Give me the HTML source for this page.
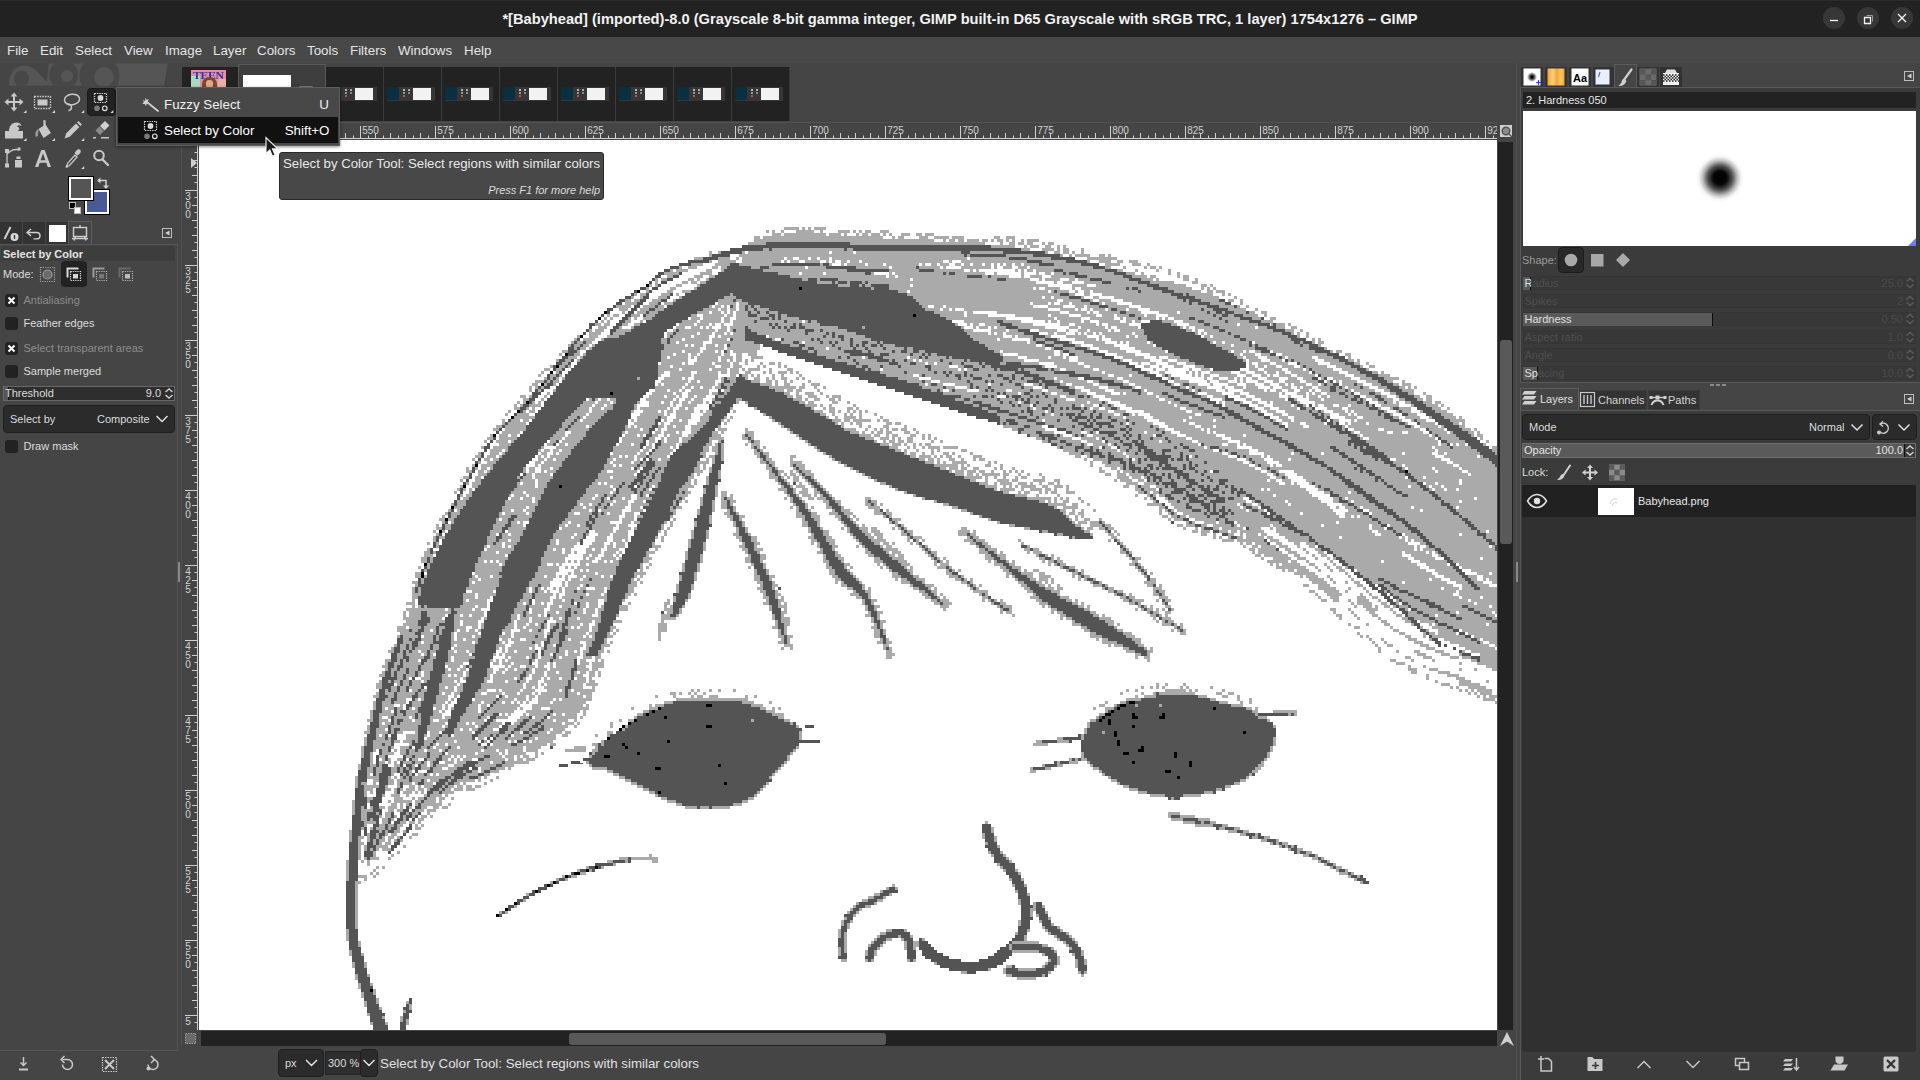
<!DOCTYPE html><html><head><meta charset="utf-8"><title>GIMP</title><style>
*{box-sizing:border-box;margin:0;padding:0}
html,body{width:1920px;height:1080px;overflow:hidden;background:#454545}
body{font-family:"Liberation Sans",sans-serif;font-size:13px;color:#dcdcdc;position:relative}
.a{position:absolute}
.t{position:absolute;white-space:nowrap;line-height:1}
#title{left:0;top:0;width:1920px;height:37px;background:#222;border-top:1px solid #2c2c2c}
#title .tx{left:0;width:1920px;top:11px;text-align:center;font-weight:bold;font-size:14.67px;color:#f2f2f2}
.wc{position:absolute;top:6px;width:22px;height:22px;border-radius:11px;background:#373737}
#menubar{left:0;top:37px;width:1920px;height:26px;background:#484848}
#menubar .t{top:7px;font-size:13.33px;color:#e4e4e4}
#leftdock{left:0;top:63px;width:178px;height:1017px;background:#454545}
#rightdock{left:1520px;top:63px;width:400px;height:1017px;background:#454545}
.ic{position:absolute;overflow:visible}
.chk{position:absolute;width:13px;height:13px;border-radius:3px;background:#222}
.row{position:absolute;left:1523px;width:393px;height:14px;background:#383838;border:1px solid #353535}
.dim{color:#505050}
</style></head><body><div id="title" class="a"><div class="t tx" id="ttx">*[Babyhead] (imported)-8.0 (Grayscale 8-bit gamma integer, GIMP built-in D65 Grayscale with sRGB TRC, 1 layer) 1754x1276 – GIMP</div><div class="wc" style="left:1823px"></div><div class="wc" style="left:1857px"></div><div class="wc" style="left:1891px"></div><svg class="a" style="left:1823px;top:5px" width="90" height="24" viewBox="1823 6 90 24" fill="none" stroke="#f4f4f4" stroke-width="1.3"><path d="M1830 20.5h8"/><path d="M1864.5 17.5h6v6h-6z"/><path d="M1866.5 15.5h6v6" stroke="#9a9a9a" stroke-width="1"/><path d="M1898 14l8 8M1906 14l-8 8"/></svg></div><div id="menubar" class="a"><div class="t" style="left:7px">File</div><div class="t" style="left:40px">Edit</div><div class="t" style="left:75px">Select</div><div class="t" style="left:124px">View</div><div class="t" style="left:165px">Image</div><div class="t" style="left:213px">Layer</div><div class="t" style="left:257px">Colors</div><div class="t" style="left:307px">Tools</div><div class="t" style="left:350px">Filters</div><div class="t" style="left:398px">Windows</div><div class="t" style="left:464px">Help</div></div><div id="leftdock" class="a"></div><svg class="a" style="left:0;top:63px" width="178" height="26" viewBox="0 63 178 26"><clipPath id="wb"><rect x="0" y="63.300" width="178" height="22.500"/></clipPath><g clip-path="url(#wb)"><path d="M8.900 85.800C8.900 74 14 66.500 24 65.700 32 65.200 38 72 46.900 81.800L48.700 63.300H167.800L164 85.800z" fill="#555"/><ellipse cx="21.500" cy="78.700" rx="7.500" ry="8.200" fill="#474747"/><circle cx="63.700" cy="75" r="14.500" fill="#474747"/><circle cx="67" cy="76" r="6" fill="#555"/><circle cx="99.400" cy="76" r="20" fill="#474747"/><circle cx="104" cy="76.900" r="9.800" fill="#555"/></g></svg><div class="a" style="left:87px;top:88px;width:29px;height:28px;background:#222;border-radius:4px;border:1px solid #1a1a1a"></div><svg class="a" style="left:0;top:88px" width="120" height="84" viewBox="0 88 120 84" fill="#c8c8c8" stroke="none"><path d="M14 92.5l3.4 4h-2.4v4.5h4.5v-2.4l4 3.4-4 3.4v-2.4h-4.5v4.5h2.4l-3.4 4-3.4-4h2.4v-4.5h-4.5v2.4l-4-3.4 4-3.4v2.4h4.5v-4.5h-2.4z"/><rect x="34.5" y="96.5" width="16" height="12" fill="none" stroke="#c8c8c8" stroke-width="1.3" stroke-dasharray="1.6 1"/><rect x="37.5" y="99.5" width="10" height="6" /><ellipse cx="72" cy="99.5" rx="7.6" ry="5.3" fill="none" stroke="#c8c8c8" stroke-width="1.5" transform="rotate(-8 72 99.5)"/><path d="M67.5 104c2 0 4 1.5 4 3.3 0 2-1.3 3-3 3.5" fill="none" stroke="#c8c8c8" stroke-width="1.5"/><rect x="94.5" y="93.5" width="12" height="9" fill="none" stroke="#d8d8d8" stroke-width="1.2" stroke-dasharray="1.4 1"/><circle cx="100.5" cy="98" r="2.9" fill="#d8d8d8"/><circle cx="97" cy="108.3" r="2.8" fill="#7a7a7a"/><circle cx="104.8" cy="108.3" r="2.3" fill="none" stroke="#e0e0e0" stroke-width="1.2"/><path d="M5 138.5v-7.5h4c0-5 3-8.500 7.500-8.500 3 0 4.500 1.500 5 3.500-1.500-1-3.500-1-4.500 0.500 1.200 0 2.200 1 2.200 2.200 0 1.300-1 2.300-2.300 2.300h6.100v7.500z"/><path d="M44.500 121v9" stroke="#c8c8c8" stroke-width="2.2" stroke-linecap="round"/><path d="M38.500 129l7-4.500 5.500 8.500-7.500 5z"/><path d="M38.500 129c-2.500 1-3.500 3-3 8l2.500-1z" fill="#9a9a9a"/><path d="M64.500 138.500l1.800-5.200 9.700-9.700 3.400 3.400-9.700 9.700z"/><path d="M77 122.600l1.500-1.500 3.400 3.400-1.500 1.500z"/><path d="M100 126l5-5 4.500 4.500-5 5z" fill="#d0d0d0"/><path d="M95.500 130.500l4-4 4.500 4.500-4 4z" fill="#8a8a8a"/><path d="M93 137.700h3M101 137.700h8" stroke="#c8c8c8" stroke-width="1.400"/><path d="M7 151v15M7 154c5-5 9-5 12-4" fill="none" stroke="#c8c8c8" stroke-width="1.300"/><rect x="5" y="149" width="4" height="4"/><rect x="5" y="163.500" width="4" height="4"/><rect x="17.500" y="147.500" width="3" height="3"/><path d="M15 160h7v7.500h-7z"/><rect x="16.500" y="156.500" width="4" height="2.500"/><path d="M35 167l6.300-17h3.400l6.300 17h-3.300l-1.400-4.200h-6.600l-1.400 4.200zm5.600-6.800h4.800l-2.400-7z"/><path d="M66.500 166.500l1-3 7.500-8.500 2 2-7.500 8.500z" fill="none" stroke="#c8c8c8" stroke-width="1.300"/><path d="M74.500 153l2.200-2.800c1-1.200 2.800-1.200 3.600-.2.800 1 .6 2.400-.4 3.400l-2.600 2.400z"/><circle cx="67" cy="166.500" r="1.300"/><circle cx="99" cy="155.500" r="4.800" fill="none" stroke="#c8c8c8" stroke-width="2"/><path d="M102.500 159.500l5.500 5.500" stroke="#c8c8c8" stroke-width="2.400" stroke-linecap="round"/><path d="M26.5 113.0v-3l-3 3z" fill="#d8d8d8"/><path d="M55.0 113.0v-3l-3 3z" fill="#d8d8d8"/><path d="M84.2 113.0v-3l-3 3z" fill="#d8d8d8"/><path d="M113.3 113.0v-3l-3 3z" fill="#d8d8d8"/><path d="M26.5 141.0v-3l-3 3z" fill="#d8d8d8"/><path d="M55.0 141.0v-3l-3 3z" fill="#d8d8d8"/><path d="M84.2 141.0v-3l-3 3z" fill="#d8d8d8"/><path d="M84.2 169.0v-3l-3 3z" fill="#d8d8d8"/></svg><div class="a" style="left:85px;top:190px;width:24px;height:24px;background:#4a5a96;border:2px solid #fff;outline:1px solid #000"></div><div class="a" style="left:69px;top:177px;width:24px;height:23px;background:#555;border:2px solid #fff;outline:1px solid #000"></div><svg class="a" style="left:68px;top:176px" width="44" height="40" viewBox="68 176 44 40"><path d="M99.500 180.500h6.500v6" fill="none" stroke="#d0d0d0" stroke-width="1.500"/><path d="M100.500 177.500v6l-3.500-3zM103 185.500h6l-3 3.500z" fill="#d0d0d0"/><rect x="69.500" y="202.500" width="6" height="6" fill="#000" stroke="#bbb" stroke-width="1"/><rect x="74.500" y="207.500" width="6" height="6" fill="#fff" stroke="#bbb" stroke-width="1"/></svg><div class="a" style="left:0;top:222px;width:22px;height:22px;background:#333"></div><div class="a" style="left:23px;top:222px;width:22px;height:22px;background:#333"></div><div class="a" style="left:46px;top:222px;width:22px;height:22px;background:#333"></div><div class="a" style="left:49px;top:225px;width:17px;height:17px;background:#fff"></div><div class="a" style="left:68px;top:221px;width:24px;height:24px;background:#454545;border:1px solid #5c5c5c;border-bottom:none"></div><svg class="a" style="left:0;top:221px" width="178" height="24" viewBox="0 221 178 24" fill="none" stroke="#d0d0d0" stroke-width="1.400"><path d="M4.500 239l6-12" stroke-width="2"/><circle cx="14.500" cy="237" r="4" fill="#d8d8d8" stroke="none"/><path d="M14.500 235v4" stroke="#333" stroke-width="1.300"/><path d="M31 229l-4 3.500 4 3.500M27.500 232.500h9c2 0 3.500 1.500 3.500 3.200 0 1.800-1.500 3.200-3.500 3.200h-3" /><rect x="73.500" y="227.500" width="13" height="9"/><path d="M75.500 236.500l-1.500 4M84.500 236.500l1.500 4M72 238.500h16M80 227v-2"/><rect x="162.500" y="228.500" width="9" height="9" stroke="#bdbdbd" stroke-width="1"/><path d="M169.500 230.500v5l-4.500-2.500z" fill="#cfcfcf" stroke="none"/></svg><div class="a" style="left:0;top:244px;width:178px;height:807px;border:1px solid #555;border-left:none;background:#454545"></div><div class="a" style="left:1px;top:246px;width:174px;height:15px;background:#3d3d3d"></div><div class="t" style="left:3.0px;top:248.7px;font-size:11.00px;color:#e4e4e4;font-weight:bold">Select by Color</div><div class="t" style="left:3.0px;top:268.7px;font-size:11.00px;color:#dcdcdc;">Mode:</div><div class="a" style="left:61px;top:261px;width:26px;height:26px;background:#222;border-radius:4px"></div><svg class="a" style="left:38px;top:262px" width="100" height="24" viewBox="38 262 100 24" fill="none" stroke="#c0c0c0" stroke-width="1.200"><rect x="40.500" y="267.500" width="14" height="14" stroke-dasharray="1.300 1" stroke="#9a9a9a"/><circle cx="47.500" cy="274.500" r="4.500" fill="#6a6a6a" stroke="#9a9a9a"/><path d="M67.500 277.500v-9h11" stroke="#d8d8d8" stroke-width="2"/><rect x="70.500" y="271.500" width="10" height="9" stroke-dasharray="1.300 1" stroke="#d8d8d8"/><rect x="73" y="274" width="5" height="4.500" fill="#d8d8d8" stroke="none"/><path d="M93.500 277.500v-9h11" stroke="#9a9a9a" stroke-width="2"/><rect x="96.500" y="271.500" width="10" height="9" stroke-dasharray="1.300 1" stroke="#aaa"/><rect x="99" y="274" width="5" height="4.500" fill="#777" stroke="none"/><path d="M119.500 277.500v-9h11" stroke="#6a6a6a" stroke-width="2"/><rect x="122.500" y="271.500" width="10" height="9" stroke-dasharray="1.300 1" stroke="#aaa"/><rect x="125" y="274" width="5" height="4.500" fill="#bbb" stroke="none"/></svg><div class="chk" style="left:5px;top:293.5px"></div><svg class="a" style="left:5px;top:293.5px" width="13" height="13"><path d="M3.500 3.500l6 6M9.500 3.500l-6 6" stroke="#fff" stroke-width="2"/></svg><div class="t" style="left:23.5px;top:294.7px;font-size:11.00px;color:#8c8c8c;">Antialiasing</div><div class="chk" style="left:5px;top:317.0px"></div><div class="t" style="left:23.5px;top:318.2px;font-size:11.00px;color:#dcdcdc;">Feather edges</div><div class="chk" style="left:5px;top:341.5px"></div><svg class="a" style="left:5px;top:341.5px" width="13" height="13"><path d="M3.500 3.500l6 6M9.500 3.500l-6 6" stroke="#fff" stroke-width="2"/></svg><div class="t" style="left:23.5px;top:342.7px;font-size:11.00px;color:#8c8c8c;">Select transparent areas</div><div class="chk" style="left:5px;top:364.5px"></div><div class="t" style="left:23.5px;top:365.7px;font-size:11.00px;color:#dcdcdc;">Sample merged</div><div class="chk" style="left:5px;top:439.5px"></div><div class="t" style="left:23.5px;top:440.7px;font-size:11.00px;color:#dcdcdc;">Draw mask</div><div class="a" style="left:3px;top:386px;width:172px;height:15px;background:#2e2e2e;border:1px solid #686868"></div><div class="a" style="left:4px;top:387px;width:5px;height:13px;background:#555"></div><div class="a" style="left:8px;top:387px;width:1px;height:13px;background:#111"></div><div class="t" style="left:5.0px;top:388.2px;font-size:11.00px;color:#dcdcdc;">Threshold</div><div class="t" style="right:1759.0px;top:388.2px;font-size:11.00px;color:#dcdcdc;">9.0</div><svg class="a" style="left:164px;top:387px" width="10" height="13" fill="none" stroke="#d0d0d0" stroke-width="1.400"><path d="M1.500 5l3.500-3 3.500 3M1.500 8l3.500 3 3.500-3"/></svg><div class="a" style="left:3px;top:405px;width:172px;height:28px;background:#2b2b2b;border:1px solid #1f1f1f;border-radius:4px"></div><div class="t" style="left:10.0px;top:413.7px;font-size:11.00px;color:#dcdcdc;">Select by</div><div class="t" style="left:97.0px;top:413.7px;font-size:11.00px;color:#dcdcdc;">Composite</div><svg class="a" style="left:155px;top:414px" width="14" height="10" fill="none" stroke="#e0e0e0" stroke-width="1.500"><path d="M1.500 2l5.500 5.500L12.500 2"/></svg><svg class="a" style="left:0;top:1052px" width="178" height="26" viewBox="0 1052 178 26" fill="none" stroke="#c8c8c8" stroke-width="1.500"><path d="M23.500 1057v8M20.500 1062.500l3 3 3-3" /><path d="M19 1068.500h9v2h-9z" fill="#c8c8c8" stroke="none"/><path d="M62.500 1059.500h5a5 5 0 1 1-5 5" /><path d="M64.500 1056l-3.500 3.500 3.500 3.500" /><rect x="102.500" y="1057.500" width="14" height="14" stroke-dasharray="1.500 1" stroke-width="1.200"/><path d="M105 1060l9 9M114 1060l-9 9" stroke-width="2"/><path d="M153 1059.500a5 5 0 1 1-5 5" /><path d="M151 1056l3.500 3.500-3.500 3.500" /><circle cx="148.500" cy="1068.500" r="2" fill="#c8c8c8" stroke="none"/></svg><div class="a" style="left:182px;top:67px;width:608px;height:54px;background:#222"></div><div class="a" style="left:325px;top:67px;width:1px;height:54px;background:#3a3a3a"></div><div class="a" style="left:383px;top:67px;width:1px;height:54px;background:#3a3a3a"></div><div class="a" style="left:441px;top:67px;width:1px;height:54px;background:#3a3a3a"></div><div class="a" style="left:499px;top:67px;width:1px;height:54px;background:#3a3a3a"></div><div class="a" style="left:557px;top:67px;width:1px;height:54px;background:#3a3a3a"></div><div class="a" style="left:615px;top:67px;width:1px;height:54px;background:#3a3a3a"></div><div class="a" style="left:673px;top:67px;width:1px;height:54px;background:#3a3a3a"></div><div class="a" style="left:731px;top:67px;width:1px;height:54px;background:#3a3a3a"></div><div class="a" style="left:789px;top:67px;width:1px;height:54px;background:#3a3a3a"></div><div class="a" style="left:191px;top:70px;width:35px;height:20px;background:#ee8aa2;overflow:hidden"><div class="a" style="left:0;top:6px;width:9px;height:14px;background:#a8dcc0"></div><div class="a" style="left:27px;top:9px;width:8px;height:11px;background:#e8b0a8"></div><div class="t" style="left:2px;top:0.5px;font-family:'Liberation Serif',serif;font-weight:bold;font-size:10px;letter-spacing:-0.3px;color:#2a3a9c;transform:scaleX(1.18);transform-origin:0 0">TEEN</div><div class="a" style="left:11px;top:7px;width:15px;height:14px;border-radius:7px 7px 0 0;background:#7a4a2c"></div><div class="a" style="left:15px;top:10px;width:7px;height:8px;border-radius:3px;background:#e0a888"></div><div class="a" style="left:14px;top:17px;width:10px;height:4px;background:#c8a030"></div></div><div class="a" style="left:238px;top:64px;width:88px;height:58px;background:#3e3e3e;border:1px solid #595959;border-bottom:none"></div><div class="a" style="left:243px;top:75px;width:48px;height:20px;background:#fff"></div><div class="a" style="left:299px;top:86px;width:14px;height:3px;background:#777;border-radius:1px"></div><div class="a" style="left:329px;top:87px;width:48px;height:14px;background:#363636"></div><div class="a" style="left:329px;top:87px;width:12px;height:13px;background:#0a2f40"></div><div class="a" style="left:355px;top:88px;width:18px;height:12px;background:#f2f2f2"></div><div class="a" style="left:345px;top:89px;width:2px;height:2px;background:#b8b8b8;box-shadow:0 3px #999,0 6px #c05050,5px 0 #aaa,5px 3px #888"></div><div class="a" style="left:387px;top:87px;width:48px;height:14px;background:#363636"></div><div class="a" style="left:387px;top:87px;width:12px;height:13px;background:#0a2f40"></div><div class="a" style="left:413px;top:88px;width:18px;height:12px;background:#f2f2f2"></div><div class="a" style="left:403px;top:89px;width:2px;height:2px;background:#b8b8b8;box-shadow:0 3px #999,0 6px #c05050,5px 0 #aaa,5px 3px #888"></div><div class="a" style="left:445px;top:87px;width:48px;height:14px;background:#363636"></div><div class="a" style="left:445px;top:87px;width:12px;height:13px;background:#0a2f40"></div><div class="a" style="left:471px;top:88px;width:18px;height:12px;background:#f2f2f2"></div><div class="a" style="left:461px;top:89px;width:2px;height:2px;background:#b8b8b8;box-shadow:0 3px #999,0 6px #c05050,5px 0 #aaa,5px 3px #888"></div><div class="a" style="left:503px;top:87px;width:48px;height:14px;background:#363636"></div><div class="a" style="left:503px;top:87px;width:12px;height:13px;background:#0a2f40"></div><div class="a" style="left:529px;top:88px;width:18px;height:12px;background:#f2f2f2"></div><div class="a" style="left:519px;top:89px;width:2px;height:2px;background:#b8b8b8;box-shadow:0 3px #999,0 6px #c05050,5px 0 #aaa,5px 3px #888"></div><div class="a" style="left:561px;top:87px;width:48px;height:14px;background:#363636"></div><div class="a" style="left:561px;top:87px;width:12px;height:13px;background:#0a2f40"></div><div class="a" style="left:587px;top:88px;width:18px;height:12px;background:#f2f2f2"></div><div class="a" style="left:577px;top:89px;width:2px;height:2px;background:#b8b8b8;box-shadow:0 3px #999,0 6px #c05050,5px 0 #aaa,5px 3px #888"></div><div class="a" style="left:619px;top:87px;width:48px;height:14px;background:#363636"></div><div class="a" style="left:619px;top:87px;width:12px;height:13px;background:#0a2f40"></div><div class="a" style="left:645px;top:88px;width:18px;height:12px;background:#f2f2f2"></div><div class="a" style="left:635px;top:89px;width:2px;height:2px;background:#b8b8b8;box-shadow:0 3px #999,0 6px #c05050,5px 0 #aaa,5px 3px #888"></div><div class="a" style="left:677px;top:87px;width:48px;height:14px;background:#363636"></div><div class="a" style="left:677px;top:87px;width:12px;height:13px;background:#0a2f40"></div><div class="a" style="left:703px;top:88px;width:18px;height:12px;background:#f2f2f2"></div><div class="a" style="left:693px;top:89px;width:2px;height:2px;background:#b8b8b8;box-shadow:0 3px #999,0 6px #c05050,5px 0 #aaa,5px 3px #888"></div><div class="a" style="left:735px;top:87px;width:48px;height:14px;background:#363636"></div><div class="a" style="left:735px;top:87px;width:12px;height:13px;background:#0a2f40"></div><div class="a" style="left:761px;top:88px;width:18px;height:12px;background:#f2f2f2"></div><div class="a" style="left:751px;top:89px;width:2px;height:2px;background:#b8b8b8;box-shadow:0 3px #999,0 6px #c05050,5px 0 #aaa,5px 3px #888"></div><svg class="a" style="left:182px;top:122px" width="1315" height="18" viewBox="182 122 1315 18"><rect x="182" y="122" width="1331" height="18" fill="#454545"/><rect x="182" y="122" width="1316" height="1" fill="#525252"/><rect x="199" y="138" width="1298" height="1" fill="#cfcfcf"/><text x="212.2" y="134" font-size="10" fill="#d0d0d0" font-family="Liberation Sans,sans-serif">500</text><text x="287.2" y="134" font-size="10" fill="#d0d0d0" font-family="Liberation Sans,sans-serif">525</text><text x="362.2" y="134" font-size="10" fill="#d0d0d0" font-family="Liberation Sans,sans-serif">550</text><text x="437.2" y="134" font-size="10" fill="#d0d0d0" font-family="Liberation Sans,sans-serif">575</text><text x="512.2" y="134" font-size="10" fill="#d0d0d0" font-family="Liberation Sans,sans-serif">600</text><text x="587.2" y="134" font-size="10" fill="#d0d0d0" font-family="Liberation Sans,sans-serif">625</text><text x="662.2" y="134" font-size="10" fill="#d0d0d0" font-family="Liberation Sans,sans-serif">650</text><text x="737.2" y="134" font-size="10" fill="#d0d0d0" font-family="Liberation Sans,sans-serif">675</text><text x="812.2" y="134" font-size="10" fill="#d0d0d0" font-family="Liberation Sans,sans-serif">700</text><text x="887.2" y="134" font-size="10" fill="#d0d0d0" font-family="Liberation Sans,sans-serif">725</text><text x="962.2" y="134" font-size="10" fill="#d0d0d0" font-family="Liberation Sans,sans-serif">750</text><text x="1037.2" y="134" font-size="10" fill="#d0d0d0" font-family="Liberation Sans,sans-serif">775</text><text x="1112.2" y="134" font-size="10" fill="#d0d0d0" font-family="Liberation Sans,sans-serif">800</text><text x="1187.2" y="134" font-size="10" fill="#d0d0d0" font-family="Liberation Sans,sans-serif">825</text><text x="1262.2" y="134" font-size="10" fill="#d0d0d0" font-family="Liberation Sans,sans-serif">850</text><text x="1337.2" y="134" font-size="10" fill="#d0d0d0" font-family="Liberation Sans,sans-serif">875</text><text x="1412.2" y="134" font-size="10" fill="#d0d0d0" font-family="Liberation Sans,sans-serif">900</text><text x="1487.2" y="134" font-size="10" fill="#d0d0d0" font-family="Liberation Sans,sans-serif">925</text><path d="M203.5 135.5v2.5M210.5 126v12M218.5 135.5v2.5M225.5 133v5M233.5 135.5v2.5M240.5 133v5M248.5 135.5v2.5M255.5 133v5M263.5 135.5v2.5M270.5 133v5M278.5 135.5v2.5M285.5 126v12M293.5 135.5v2.5M300.5 133v5M308.5 135.5v2.5M315.5 133v5M323.5 135.5v2.5M330.5 133v5M338.5 135.5v2.5M345.5 133v5M353.5 135.5v2.5M360.5 126v12M368.5 135.5v2.5M375.5 133v5M383.5 135.5v2.5M390.5 133v5M398.5 135.5v2.5M405.5 133v5M413.5 135.5v2.5M420.5 133v5M428.5 135.5v2.5M435.5 126v12M443.5 135.5v2.5M450.5 133v5M458.5 135.5v2.5M465.5 133v5M473.5 135.5v2.5M480.5 133v5M488.5 135.5v2.5M495.5 133v5M503.5 135.5v2.5M510.5 126v12M518.5 135.5v2.5M525.5 133v5M533.5 135.5v2.5M540.5 133v5M548.5 135.5v2.5M555.5 133v5M563.5 135.5v2.5M570.5 133v5M578.5 135.5v2.5M585.5 126v12M593.5 135.5v2.5M600.5 133v5M608.5 135.5v2.5M615.5 133v5M623.5 135.5v2.5M630.5 133v5M638.5 135.5v2.5M645.5 133v5M653.5 135.5v2.5M660.5 126v12M668.5 135.5v2.5M675.5 133v5M683.5 135.5v2.5M690.5 133v5M698.5 135.5v2.5M705.5 133v5M713.5 135.5v2.5M720.5 133v5M728.5 135.5v2.5M735.5 126v12M743.5 135.5v2.5M750.5 133v5M758.5 135.5v2.5M765.5 133v5M773.5 135.5v2.5M780.5 133v5M788.5 135.5v2.5M795.5 133v5M803.5 135.5v2.5M810.5 126v12M818.5 135.5v2.5M825.5 133v5M833.5 135.5v2.5M840.5 133v5M848.5 135.5v2.5M855.5 133v5M863.5 135.5v2.5M870.5 133v5M878.5 135.5v2.5M885.5 126v12M893.5 135.5v2.5M900.5 133v5M908.5 135.5v2.5M915.5 133v5M923.5 135.5v2.5M930.5 133v5M938.5 135.5v2.5M945.5 133v5M953.5 135.5v2.5M960.5 126v12M968.5 135.5v2.5M975.5 133v5M983.5 135.5v2.5M990.5 133v5M998.5 135.5v2.5M1005.5 133v5M1013.5 135.5v2.5M1020.5 133v5M1028.5 135.5v2.5M1035.5 126v12M1043.5 135.5v2.5M1050.5 133v5M1058.5 135.5v2.5M1065.5 133v5M1073.5 135.5v2.5M1080.5 133v5M1088.5 135.5v2.5M1095.5 133v5M1103.5 135.5v2.5M1110.5 126v12M1118.5 135.5v2.5M1125.5 133v5M1133.5 135.5v2.5M1140.5 133v5M1148.5 135.5v2.5M1155.5 133v5M1163.5 135.5v2.5M1170.5 133v5M1178.5 135.5v2.5M1185.5 126v12M1193.5 135.5v2.5M1200.5 133v5M1208.5 135.5v2.5M1215.5 133v5M1223.5 135.5v2.5M1230.5 133v5M1238.5 135.5v2.5M1245.5 133v5M1253.5 135.5v2.5M1260.5 126v12M1268.5 135.5v2.5M1275.5 133v5M1283.5 135.5v2.5M1290.5 133v5M1298.5 135.5v2.5M1305.5 133v5M1313.5 135.5v2.5M1320.5 133v5M1328.5 135.5v2.5M1335.5 126v12M1343.5 135.5v2.5M1350.5 133v5M1358.5 135.5v2.5M1365.5 133v5M1373.5 135.5v2.5M1380.5 133v5M1388.5 135.5v2.5M1395.5 133v5M1403.5 135.5v2.5M1410.5 126v12M1418.5 135.5v2.5M1425.5 133v5M1433.5 135.5v2.5M1440.5 133v5M1448.5 135.5v2.5M1455.5 133v5M1463.5 135.5v2.5M1470.5 133v5M1478.5 135.5v2.5M1485.5 126v12M1493.5 135.5v2.5" stroke="#cfcfcf" stroke-width="1" fill="none"/></svg><svg class="a" style="left:181px;top:122px" width="18" height="924" viewBox="181 122 18 924"><rect x="181" y="122" width="18" height="924" fill="#454545"/><rect x="181" y="122" width="1" height="924" fill="#525252"/><rect x="197" y="140" width="1" height="890" fill="#cfcfcf"/><text x="188" y="200.0" text-anchor="middle" font-size="10" fill="#d0d0d0" font-family="Liberation Sans,sans-serif">3</text><text x="188" y="209.0" text-anchor="middle" font-size="10" fill="#d0d0d0" font-family="Liberation Sans,sans-serif">0</text><text x="188" y="218.0" text-anchor="middle" font-size="10" fill="#d0d0d0" font-family="Liberation Sans,sans-serif">0</text><text x="188" y="275.0" text-anchor="middle" font-size="10" fill="#d0d0d0" font-family="Liberation Sans,sans-serif">3</text><text x="188" y="284.0" text-anchor="middle" font-size="10" fill="#d0d0d0" font-family="Liberation Sans,sans-serif">2</text><text x="188" y="293.0" text-anchor="middle" font-size="10" fill="#d0d0d0" font-family="Liberation Sans,sans-serif">5</text><text x="188" y="350.0" text-anchor="middle" font-size="10" fill="#d0d0d0" font-family="Liberation Sans,sans-serif">3</text><text x="188" y="359.0" text-anchor="middle" font-size="10" fill="#d0d0d0" font-family="Liberation Sans,sans-serif">5</text><text x="188" y="368.0" text-anchor="middle" font-size="10" fill="#d0d0d0" font-family="Liberation Sans,sans-serif">0</text><text x="188" y="425.0" text-anchor="middle" font-size="10" fill="#d0d0d0" font-family="Liberation Sans,sans-serif">3</text><text x="188" y="434.0" text-anchor="middle" font-size="10" fill="#d0d0d0" font-family="Liberation Sans,sans-serif">7</text><text x="188" y="443.0" text-anchor="middle" font-size="10" fill="#d0d0d0" font-family="Liberation Sans,sans-serif">5</text><text x="188" y="500.0" text-anchor="middle" font-size="10" fill="#d0d0d0" font-family="Liberation Sans,sans-serif">4</text><text x="188" y="509.0" text-anchor="middle" font-size="10" fill="#d0d0d0" font-family="Liberation Sans,sans-serif">0</text><text x="188" y="518.0" text-anchor="middle" font-size="10" fill="#d0d0d0" font-family="Liberation Sans,sans-serif">0</text><text x="188" y="575.0" text-anchor="middle" font-size="10" fill="#d0d0d0" font-family="Liberation Sans,sans-serif">4</text><text x="188" y="584.0" text-anchor="middle" font-size="10" fill="#d0d0d0" font-family="Liberation Sans,sans-serif">2</text><text x="188" y="593.0" text-anchor="middle" font-size="10" fill="#d0d0d0" font-family="Liberation Sans,sans-serif">5</text><text x="188" y="650.0" text-anchor="middle" font-size="10" fill="#d0d0d0" font-family="Liberation Sans,sans-serif">4</text><text x="188" y="659.0" text-anchor="middle" font-size="10" fill="#d0d0d0" font-family="Liberation Sans,sans-serif">5</text><text x="188" y="668.0" text-anchor="middle" font-size="10" fill="#d0d0d0" font-family="Liberation Sans,sans-serif">0</text><text x="188" y="725.0" text-anchor="middle" font-size="10" fill="#d0d0d0" font-family="Liberation Sans,sans-serif">4</text><text x="188" y="734.0" text-anchor="middle" font-size="10" fill="#d0d0d0" font-family="Liberation Sans,sans-serif">7</text><text x="188" y="743.0" text-anchor="middle" font-size="10" fill="#d0d0d0" font-family="Liberation Sans,sans-serif">5</text><text x="188" y="800.0" text-anchor="middle" font-size="10" fill="#d0d0d0" font-family="Liberation Sans,sans-serif">5</text><text x="188" y="809.0" text-anchor="middle" font-size="10" fill="#d0d0d0" font-family="Liberation Sans,sans-serif">0</text><text x="188" y="818.0" text-anchor="middle" font-size="10" fill="#d0d0d0" font-family="Liberation Sans,sans-serif">0</text><text x="188" y="875.0" text-anchor="middle" font-size="10" fill="#d0d0d0" font-family="Liberation Sans,sans-serif">5</text><text x="188" y="884.0" text-anchor="middle" font-size="10" fill="#d0d0d0" font-family="Liberation Sans,sans-serif">2</text><text x="188" y="893.0" text-anchor="middle" font-size="10" fill="#d0d0d0" font-family="Liberation Sans,sans-serif">5</text><text x="188" y="950.0" text-anchor="middle" font-size="10" fill="#d0d0d0" font-family="Liberation Sans,sans-serif">5</text><text x="188" y="959.0" text-anchor="middle" font-size="10" fill="#d0d0d0" font-family="Liberation Sans,sans-serif">5</text><text x="188" y="968.0" text-anchor="middle" font-size="10" fill="#d0d0d0" font-family="Liberation Sans,sans-serif">0</text><text x="188" y="1025.0" text-anchor="middle" font-size="10" fill="#d0d0d0" font-family="Liberation Sans,sans-serif">5</text><path d="M192 145.5h5M194.5 152.5h2.5M192 160.5h5M194.5 167.5h2.5M192 175.5h5M194.5 182.5h2.5M185 190.5h12M194.5 197.5h2.5M192 205.5h5M194.5 212.5h2.5M192 220.5h5M194.5 227.5h2.5M192 235.5h5M194.5 242.5h2.5M192 250.5h5M194.5 257.5h2.5M185 265.5h12M194.5 272.5h2.5M192 280.5h5M194.5 287.5h2.5M192 295.5h5M194.5 302.5h2.5M192 310.5h5M194.5 317.5h2.5M192 325.5h5M194.5 332.5h2.5M185 340.5h12M194.5 347.5h2.5M192 355.5h5M194.5 362.5h2.5M192 370.5h5M194.5 377.5h2.5M192 385.5h5M194.5 392.5h2.5M192 400.5h5M194.5 407.5h2.5M185 415.5h12M194.5 422.5h2.5M192 430.5h5M194.5 437.5h2.5M192 445.5h5M194.5 452.5h2.5M192 460.5h5M194.5 467.5h2.5M192 475.5h5M194.5 482.5h2.5M185 490.5h12M194.5 497.5h2.5M192 505.5h5M194.5 512.5h2.5M192 520.5h5M194.5 527.5h2.5M192 535.5h5M194.5 542.5h2.5M192 550.5h5M194.5 557.5h2.5M185 565.5h12M194.5 572.5h2.5M192 580.5h5M194.5 587.5h2.5M192 595.5h5M194.5 602.5h2.5M192 610.5h5M194.5 617.5h2.5M192 625.5h5M194.5 632.5h2.5M185 640.5h12M194.5 647.5h2.5M192 655.5h5M194.5 662.5h2.5M192 670.5h5M194.5 677.5h2.5M192 685.5h5M194.5 692.5h2.5M192 700.5h5M194.5 707.5h2.5M185 715.5h12M194.5 722.5h2.5M192 730.5h5M194.5 737.5h2.5M192 745.5h5M194.5 752.5h2.5M192 760.5h5M194.5 767.5h2.5M192 775.5h5M194.5 782.5h2.5M185 790.5h12M194.5 797.5h2.5M192 805.5h5M194.5 812.5h2.5M192 820.5h5M194.5 827.5h2.5M192 835.5h5M194.5 842.5h2.5M192 850.5h5M194.5 857.5h2.5M185 865.5h12M194.5 872.5h2.5M192 880.5h5M194.5 887.5h2.5M192 895.5h5M194.5 902.5h2.5M192 910.5h5M194.5 917.5h2.5M192 925.5h5M194.5 932.5h2.5M185 940.5h12M194.5 947.5h2.5M192 955.5h5M194.5 962.5h2.5M192 970.5h5M194.5 977.5h2.5M192 985.5h5M194.5 992.5h2.5M192 1000.5h5M194.5 1007.5h2.5M185 1015.5h12M194.5 1022.5h2.5" stroke="#cfcfcf" stroke-width="1" fill="none"/><path d="M191 158l6 5-6 5z" fill="#cfcfcf"/></svg><div class="a" style="left:199px;top:140px;width:1298px;height:890px;background:#fff;overflow:hidden"><svg class="a" style="left:0;top:0" width="1298" height="890" viewBox="199 140 1298 890"><defs><filter id="px" x="199" y="140" width="1299" height="891" filterUnits="userSpaceOnUse" primitiveUnits="userSpaceOnUse" color-interpolation-filters="sRGB">
<feTurbulence type="fractalNoise" baseFrequency="0.37 0.41" numOctaves="1" seed="7" result="n"/>
<feColorMatrix in="n" type="matrix" values="1 0 0 0 0 1 0 0 0 0 1 0 0 0 0 0 0 0 0 1" result="ng"/>
<feComposite in="SourceGraphic" in2="ng" operator="arithmetic" k1="0" k2="1" k3="0.56" k4="-0.28" result="noisy"/>
<feComposite in="noisy" in2="SourceAlpha" operator="in" result="masked"/>
<feComponentTransfer in="masked" result="post"><feFuncR type="discrete" tableValues="0 .3333 .3333 .6667 .6667 1"/><feFuncG type="discrete" tableValues="0 .3333 .3333 .6667 .6667 1"/><feFuncB type="discrete" tableValues="0 .3333 .3333 .6667 .6667 1"/><feFuncA type="discrete" tableValues="0 1"/></feComponentTransfer>
<feFlood x="200" y="141" width="1" height="1" flood-color="#000"/><feComposite width="3" height="3"/><feTile result="grid"/>
<feComposite in="post" in2="grid" operator="in"/><feMorphology operator="dilate" radius="1"/>
</filter></defs><g filter="url(#px)"><path d="M740.0 262.0L742.8 258.9L746.2 254.3L750.5 249.0L756.0 243.7L763.1 239.1L772.0 236.0L783.3 234.4L796.9 233.9L811.9 234.0L827.9 234.6L844.2 235.4L860.0 236.0L876.0 236.7L892.9 237.7L910.1 238.9L926.9 240.1L942.7 241.2L957.0 242.0L969.3 242.4L980.1 242.5L989.9 242.5L999.4 242.6L1009.2 243.0L1020.0 244.0L1031.7 245.5L1043.7 247.5L1056.0 249.8L1068.7 252.3L1081.7 255.1L1095.0 258.0L1109.1 261.1L1124.0 264.5L1139.2 268.1L1154.3 271.9L1168.8 275.9L1182.0 280.0L1194.0 284.4L1205.3 289.0L1215.8 293.8L1225.9 298.7L1235.5 303.4L1245.0 308.0L1254.1 312.3L1262.6 316.6L1270.8 320.7L1278.8 324.8L1286.8 328.9L1295.0 333.0L1303.3 337.2L1311.7 341.3L1320.0 345.5L1328.3 349.7L1336.7 353.8L1345.0 358.0L1353.3 362.1L1361.7 366.1L1370.0 370.2L1378.3 374.3L1386.7 378.5L1395.0 383.0L1403.3 387.5L1411.5 392.1L1419.7 396.8L1428.0 401.7L1436.4 407.1L1445.0 413.0L1453.8 419.6L1462.8 426.6L1471.9 434.1L1481.1 441.9L1490.5 449.9L1500.0 458.0L1510.4 466.9L1521.9 476.7L1533.4 486.8L1544.3 496.3L1553.4 504.3L1560.0 510.0L1560.0 740.0L1553.8 735.6L1545.6 729.4L1535.6 722.2L1524.4 714.4L1512.4 706.8L1500.0 700.0L1486.3 693.9L1470.9 688.1L1454.6 682.5L1438.4 676.9L1423.2 671.1L1410.0 665.0L1398.8 658.5L1389.0 651.8L1380.2 644.9L1372.1 638.0L1364.5 631.3L1357.0 625.0L1349.9 619.0L1343.5 613.3L1337.6 607.7L1331.8 602.3L1326.0 597.1L1320.0 592.0L1313.8 587.1L1307.6 582.5L1301.3 578.0L1295.0 573.6L1288.6 569.3L1282.0 565.0L1275.4 560.7L1269.0 556.3L1262.4 552.1L1255.5 547.9L1248.1 543.9L1240.0 540.0L1231.0 536.6L1221.1 533.7L1210.8 530.9L1200.3 528.0L1189.9 524.4L1180.0 520.0L1170.8 514.5L1162.0 508.3L1153.4 501.4L1144.6 494.3L1135.3 487.1L1125.0 480.0L1113.9 472.9L1102.4 465.6L1090.3 458.2L1077.6 450.9L1064.2 443.7L1050.0 437.0L1034.8 430.7L1018.5 424.7L1001.6 418.9L984.3 413.3L967.0 407.7L950.0 402.0L932.8 396.1L914.8 389.9L896.9 383.8L879.6 378.0L863.8 372.6L850.0 368.0L838.9 364.4L829.9 361.6L822.4 359.2L815.4 357.1L808.2 354.8L800.0 352.0L790.1 348.4L779.1 344.3L767.9 340.0L757.3 335.9L748.4 332.5L742.0 330.0z" fill="#b6b6b6" stroke="#d6d6d6" stroke-width="12.0" stroke-linejoin="round" paint-order="stroke"/><path d="M940.1 307.1L963.0 310.4L985.8 313.0L1008.7 315.6L1031.4 319.6L1053.8 325.0L1075.9 331.3L1097.6 338.2L1119.2 345.5M1030.6 279.0L1053.3 285.4L1075.7 292.8L1097.8 300.8M1138.9 410.1L1158.8 422.1L1179.0 434.0L1200.5 443.9L1222.6 452.2L1244.4 461.1L1265.2 472.5L1285.3 485.1M1053.9 334.7L1075.9 341.6L1097.5 349.4L1119.0 357.4L1140.3 365.9L1161.0 375.3L1181.8 384.9L1203.3 393.7L1225.0 401.8M964.6 362.0L987.3 368.6L1010.0 375.4L1032.6 383.3M963.5 327.1L986.3 331.6L1009.2 336.3L1031.8 342.3L1054.1 349.7L1076.0 358.2M1031.1 304.3L1053.6 309.6L1075.8 315.8L1097.7 322.6L1119.5 329.7M1184.3 341.0L1205.7 350.2L1227.1 359.6L1248.3 369.3M918.7 335.1L941.4 340.3L964.1 345.4L986.8 350.0L1009.6 354.6L1032.1 360.3L1054.3 367.4L1076.0 375.6L1097.3 384.7L1118.3 394.3M1137.7 451.7L1156.8 465.9L1176.4 479.6L1197.9 490.1L1220.3 498.1L1242.5 506.9M1140.4 361.3L1161.2 369.4L1182.2 377.7L1203.7 385.3M1249.1 349.8L1269.8 361.3L1290.2 373.3L1310.7 385.2L1331.0 397.4M1431.5 452.6L1451.0 462.8L1469.9 473.8M985.8 313.7L1008.7 317.1L1031.4 322.0L1053.8 328.2L1075.9 335.5M1031.6 330.0L1053.9 336.3L1075.9 343.6L1097.5 351.7L1119.0 360.1L1140.2 368.9L1160.8 378.8L1181.6 388.8L1203.0 397.9L1224.8 406.2M920.2 369.5L942.7 375.8L965.2 381.9L987.9 387.6L1010.5 393.3L1032.9 399.8L1054.8 407.6L1076.2 416.6L1097.1 426.7L1117.6 437.3M1143.1 272.6L1165.4 278.0L1187.5 284.5L1208.9 292.6L1229.9 301.9L1250.7 311.4L1271.5 321.1L1292.1 331.5L1312.8 341.9L1333.5 352.2M1076.1 386.5L1097.3 395.1L1118.2 404.2L1138.8 413.7L1158.7 424.2L1179.0 434.5M1137.0 474.0L1155.8 488.2L1175.2 501.7L1196.7 511.5L1219.3 518.3L1241.7 526.0L1262.5 537.3L1282.4 550.2L1302.1 563.4L1321.2 577.4M898.4 378.4L920.9 386.0L943.4 393.6L965.9 401.1L988.4 408.4L1011.0 415.8L1033.3 423.8L1055.2 433.0L1076.3 443.8M1161.8 356.4L1182.9 364.4L1204.5 372.0L1226.1 379.3L1247.5 387.0" fill="none" stroke="#fff" stroke-width="3"/><path d="M1223.0 442.8L1244.9 450.8L1265.7 461.1L1285.8 472.6L1305.9 484.2L1325.6 496.3L1344.5 509.3L1363.5 522.2L1382.6 535.1M1269.4 370.3L1289.9 380.8L1310.4 391.3L1330.8 401.9L1350.9 412.8L1371.1 423.5L1391.2 434.6M963.4 323.6L986.2 326.7L1009.0 329.8L1031.7 334.2L1054.0 339.9L1075.9 346.5L1097.5 354.0M1030.9 294.6L1053.5 299.4L1075.7 305.2L1097.8 311.5L1119.7 318.1L1141.5 325.0M917.4 304.6L940.2 307.7L963.0 310.5L985.8 312.5M1075.8 318.9L1097.7 325.7L1119.4 332.7L1141.0 340.1L1162.2 348.2L1183.4 356.9L1204.9 365.3L1226.4 373.6L1247.7 382.3L1268.5 392.3" fill="none" stroke="#d0d0d0" stroke-width="4"/><path d="M1391.9 425.9L1412.0 436.2L1432.0 446.7L1451.4 458.0M1053.7 319.2L1075.8 326.2L1097.6 334.0L1119.3 342.1L1140.7 350.7L1161.7 360.1L1182.6 370.0L1204.1 379.4L1225.7 388.3L1247.1 397.7M1156.5 472.7L1176.1 485.5L1197.6 494.9L1220.1 501.7L1242.4 509.3L1263.2 520.2L1283.2 532.7L1303.0 545.3L1322.2 558.7L1340.3 573.5M1097.2 403.5L1118.0 414.2L1138.5 425.5L1158.1 438.0L1178.1 450.2L1199.6 460.1M1288.9 403.3L1309.3 413.7L1329.5 424.4L1349.4 435.6L1369.3 446.5L1389.2 457.7L1409.0 469.1L1429.0 480.2L1448.8 491.6M942.0 357.1L964.6 363.2L987.4 369.0L1010.0 374.8" fill="none" stroke="#d0d0d0" stroke-width="3"/><path d="M1137.7 451.3L1156.9 463.4L1176.7 474.8L1198.3 483.2L1220.8 489.2M1054.5 378.6L1076.1 387.4L1097.2 397.2L1118.1 407.4L1138.7 418.2M1053.8 323.7L1075.8 330.8L1097.6 338.7L1119.2 346.9L1140.6 355.5L1161.4 365.0L1182.4 374.9L1203.8 384.2M1096.9 455.2L1117.0 468.0L1136.8 481.5L1155.4 496.5L1174.7 510.7L1196.2 521.0L1218.9 528.1L1241.3 536.2L1262.1 548.0M1441.2 588.3L1462.1 597.7L1482.9 607.5L1503.3 618.1L1522.7 630.5" fill="none" stroke="#e0e0e0" stroke-width="2"/><path d="M1312.1 356.3L1332.7 366.7L1353.2 377.2L1373.8 387.5L1394.3 398.3L1414.4 409.6L1434.2 421.5M1249.4 342.0L1270.2 351.7L1290.7 361.9L1311.3 371.9L1331.8 382.0L1352.2 392.3L1372.7 402.3L1393.0 412.8L1413.1 423.6L1433.0 434.9L1452.2 447.1M984.7 272.0L1007.7 273.9L1030.6 277.5L1053.3 282.5L1075.7 288.5L1097.9 294.9L1120.0 301.6L1142.0 308.7L1163.7 316.5L1185.2 325.1L1206.6 334.3M804.7 305.9L827.6 310.9L850.4 316.3L873.2 321.9L895.9 327.7L918.7 333.7M1033.4 427.5L1055.2 438.0L1076.4 450.0L1096.8 462.2L1116.9 474.8M1289.4 391.1L1309.9 401.5L1330.2 412.1L1350.2 423.1M1120.7 264.2L1143.2 269.7L1165.5 275.8L1187.6 282.9L1209.0 291.7L1229.9 301.8L1250.7 311.9L1271.4 322.3L1292.0 333.0M830.8 356.3L853.4 363.6L876.0 371.3L898.5 379.0L920.9 386.9L943.4 394.8M801.2 261.1L824.3 263.9L847.3 267.2L870.3 270.7L893.3 274.4M808.1 348.7L830.8 355.6L853.4 362.8L875.9 370.2L898.4 377.7L920.9 385.3M895.2 312.2L917.9 316.0L940.6 319.8L963.4 323.2M1242.9 497.0L1263.7 508.6L1283.7 521.7L1303.5 534.9L1322.7 549.0L1340.9 564.4L1359.1 579.7L1377.5 594.9L1396.3 609.6L1416.5 622.3L1437.8 632.8M1119.2 344.1L1140.6 353.1L1161.5 363.1L1182.4 373.5L1203.9 383.3L1225.4 392.7L1246.9 402.4L1267.6 413.8L1287.9 426.0M1141.5 323.6L1162.9 332.2L1184.2 341.5L1205.7 351.1L1227.0 360.7L1248.2 370.7L1269.0 381.8L1289.3 393.5L1309.7 405.2M1401.5 551.9L1421.5 565.2L1442.1 577.2L1462.7 588.8M941.5 342.9L964.1 347.5L986.9 351.4L1009.6 355.5" fill="none" stroke="#fff" stroke-width="4"/><path d="M1141.7 319.6L1163.2 326.6L1184.7 334.2L1206.2 342.2L1227.5 350.5L1248.7 359.1M984.6 270.2L1007.7 270.9L1030.5 273.4L1053.2 277.3L1075.6 281.9L1097.9 287.0M1054.2 354.1L1076.0 361.5L1097.4 369.8L1118.6 378.5L1139.6 387.6L1159.9 397.8L1180.5 407.9L1202.0 416.6M1341.2 559.6L1359.5 573.8L1378.1 587.8L1397.1 601.3L1417.3 613.0L1438.6 622.6L1460.0 631.4L1481.4 640.4L1502.4 650.4" fill="none" stroke="#fff" stroke-width="2"/><path d="M1183.7 350.6L1205.2 359.7L1226.6 368.7L1247.9 378.1L1268.7 388.7L1289.0 400.1L1309.4 411.3L1329.6 422.9L1349.4 434.9M1155.5 494.0L1174.7 511.0L1196.0 524.1M1179.9 418.3L1201.3 428.2L1223.3 436.7L1245.1 445.8L1265.8 457.1L1286.0 469.6L1306.0 482.2L1325.7 495.4L1344.5 509.5M1182.7 368.3L1204.2 377.2L1225.8 385.7L1247.2 394.6L1268.0 405.0L1288.3 416.2L1308.7 427.4M986.3 331.7L1009.1 336.0L1031.8 341.6L1054.1 348.5" fill="none" stroke="#e0e0e0" stroke-width="4"/><path d="M915.6 263.1L938.6 266.1L961.6 268.9L984.7 270.9L1007.7 273.0L1030.6 276.8L1053.3 282.1L1075.7 288.4L1097.9 295.1M805.3 312.6L828.1 317.7L850.9 323.2L873.6 328.8L896.3 334.6L919.0 340.5L941.6 346.6L964.3 352.5L987.1 357.9L1009.8 363.5M1187.6 282.3L1209.0 290.7L1229.9 300.7L1250.7 310.7L1271.5 321.0L1292.1 331.5L1312.8 341.9L1333.5 352.2M828.4 321.8L851.1 327.3L873.8 333.1L896.5 338.9L919.1 345.0L941.8 351.1L964.4 357.0M1393.9 402.5L1414.2 412.2L1434.1 422.4L1453.3 433.8M1309.9 402.4L1330.0 415.0L1349.9 428.1L1369.7 441.1M1030.8 286.4L1053.4 291.9L1075.7 298.3L1097.8 305.3L1119.8 312.5L1141.6 320.2L1163.1 328.6L1184.5 337.7L1205.9 347.2L1227.2 356.8L1248.4 366.8M941.5 342.7L964.1 347.1L986.9 350.8L1009.6 354.6L1032.1 359.5L1054.3 365.5M983.9 243.8L1007.1 244.6L1030.1 247.5L1052.9 251.9L1075.5 257.0L1098.1 262.5L1120.6 268.2L1143.0 274.2L1165.3 280.8M1053.5 302.9L1075.8 308.3L1097.8 314.2L1119.7 320.3L1141.4 326.7L1162.9 333.9" fill="none" stroke="#e0e0e0" stroke-width="3"/><path d="M938.4 261.2L961.4 263.6L984.5 265.1L1007.6 266.6L1030.5 270.0L1053.2 274.9M778.2 259.1L801.0 259.1L824.0 260.5L847.0 262.3L870.0 264.1L892.9 266.0M1248.6 362.4L1269.3 373.5L1289.7 385.2L1310.1 396.9M1010.9 413.2L1033.2 419.4L1055.1 426.9L1076.3 435.6M1119.9 306.3L1141.8 313.7L1163.4 321.9L1184.8 330.8L1206.3 340.2L1227.5 350.0L1248.7 360.0L1269.4 371.0L1289.8 382.5L1310.3 394.0" fill="none" stroke="#d0d0d0" stroke-width="5"/><path d="M918.7 335.1L941.4 340.0L964.0 344.6L986.8 348.6M1141.9 310.3L1163.6 317.7L1185.1 325.9L1206.6 334.6L1227.8 343.8L1249.0 353.3L1269.7 363.7M1199.2 467.4L1221.5 473.5L1243.6 480.3L1264.5 490.0L1284.6 501.1L1304.6 512.2" fill="none" stroke="#d0d0d0" stroke-width="2"/><path d="M1345.2 499.1L1364.3 511.8L1383.5 524.5L1402.9 537.1L1423.0 548.5L1443.5 559.1L1463.9 569.4L1484.1 580.0L1504.0 591.4L1523.1 604.3L1541.7 618.0" fill="none" stroke="#e0e0e0" stroke-width="5"/><path d="M1285.8 473.5L1305.8 486.9L1325.3 500.9L1344.1 516.0M1303.0 544.7L1322.2 558.5L1340.3 573.6L1358.4 588.7L1376.7 603.5L1395.6 617.9L1415.8 630.1L1437.2 639.9L1458.9 648.9L1480.6 657.9" fill="none" stroke="#fff" stroke-width="5"/><path d="M824.3 265.0L847.4 268.9L870.5 273.0M1461.7 605.2L1482.5 615.3L1503.0 626.4L1522.6 639.4L1541.4 653.4M1176.1 485.0L1197.8 491.2L1220.5 495.0M1418.6 598.8L1439.6 609.2L1460.8 618.9M1033.1 414.8L1055.0 422.4L1076.3 431.3L1097.0 441.4L1117.3 451.9M778.6 263.9L801.4 264.3L824.4 265.9L847.4 267.9L870.3 269.9L893.2 272.1M1076.3 439.9L1096.9 449.5L1117.2 459.6L1137.1 470.1M1160.2 391.5L1180.9 400.9L1202.4 409.1L1224.3 416.3M1326.0 489.0L1345.1 501.0L1364.2 512.8L1383.5 524.7L1402.9 536.3M1186.9 294.7L1208.2 305.7L1229.1 317.7M1378.4 584.1L1397.3 598.8L1417.4 611.7L1438.6 622.5L1460.0 632.5L1481.3 642.6M1328.4 444.9L1347.9 458.0L1367.4 471.0L1386.9 484.2L1406.4 497.6M1031.8 340.0L1054.1 347.0L1076.0 355.1M1331.5 388.8L1351.8 398.7L1372.2 408.4L1392.5 418.4L1412.7 428.8M1053.4 291.6L1075.7 297.8L1097.8 304.5L1119.8 311.4L1141.7 318.8M961.1 253.4L984.2 255.1L1007.3 256.9L1030.3 260.6L1053.0 265.8M1117.7 432.0L1137.9 444.5L1157.2 458.4L1176.9 471.8M1349.0 441.0L1368.9 451.8L1388.8 462.7L1408.6 473.8M1054.6 392.5L1076.2 400.7L1097.2 409.7L1117.9 419.3L1138.3 429.3M1378.9 577.7L1398.2 589.0L1418.6 598.6L1439.8 606.3M1415.4 634.2L1437.0 643.2L1458.8 651.3L1480.6 659.5M1435.9 657.4L1457.8 667.7L1479.7 678.1M741.0 296.6L759.6 291.0L780.9 288.9M1394.7 393.2L1415.0 403.2L1434.9 413.8L1453.9 425.8L1472.1 438.9M1346.3 482.9L1365.5 496.2L1384.8 509.6L1404.1 523.0M1225.2 397.3L1246.7 406.7L1267.5 417.9L1287.7 429.9" fill="none" stroke="#555" stroke-width="3"/><path d="M1241.7 525.0L1262.5 538.2L1282.3 553.1M1263.5 512.7L1283.6 523.7L1303.5 534.7L1322.9 546.6M1142.7 283.8L1164.8 291.9L1186.5 301.2L1207.9 311.7L1228.8 323.1M941.7 349.7L964.4 355.0L987.1 359.8L1009.8 364.6M1208.8 294.7L1229.8 304.0L1250.6 313.4L1271.4 323.0L1292.0 332.9M1347.5 464.1L1367.2 474.7L1386.8 485.5L1406.6 496.2M1306.2 478.9L1325.9 491.2L1344.9 504.3" fill="none" stroke="#777" stroke-width="2"/><path d="M1136.7 484.0L1155.3 499.4L1174.5 513.9L1196.0 524.6L1218.7 532.0L1241.1 540.3M782.6 306.6L805.2 311.2L828.0 315.9L850.7 321.0M1249.3 345.2L1270.1 353.3L1290.7 361.8M852.0 341.3L874.6 346.7L897.1 352.2M1157.2 457.5L1177.1 468.5L1198.6 476.5L1221.1 482.3M757.5 269.3L778.6 264.0L801.4 264.0M1185.7 316.1L1207.2 324.2L1228.4 332.9L1249.4 341.9L1270.2 351.5M1309.7 405.9L1329.8 418.8L1349.6 432.1L1369.4 445.3L1389.1 458.9M1290.8 359.5L1311.4 370.7L1331.8 382.1L1352.1 393.7L1372.5 405.1L1392.7 417.0" fill="none" stroke="#555" stroke-width="2"/><path d="M1302.6 553.9L1321.8 566.1L1339.9 579.5M1311.1 376.1L1331.6 387.0L1351.8 398.2L1372.2 409.2L1392.4 420.5M1352.9 382.3L1373.3 394.3L1393.5 406.8L1413.5 419.8L1433.2 433.3L1452.2 447.7M1053.1 269.7L1075.6 274.7L1098.0 280.2L1120.3 285.9L1142.5 291.8M1200.5 443.8L1222.7 450.2L1244.6 457.4L1265.4 467.0L1285.6 477.8M915.9 268.6L938.8 271.9L961.8 274.9L984.8 277.1L1007.9 279.4M1161.1 373.0L1181.9 383.0L1203.4 392.2M1097.1 414.9L1117.8 427.1L1138.0 439.9M1348.8 444.4L1368.7 454.4L1388.6 464.5M825.4 279.4L848.2 281.7L871.1 283.9L893.9 286.2M1242.6 504.7L1263.5 513.9L1283.5 524.4L1303.5 535.1M802.5 277.7L825.4 280.4L848.4 283.6L871.2 286.8L894.1 290.2M1291.7 340.7L1312.4 349.0L1333.2 357.1L1354.0 365.2" fill="none" stroke="#777" stroke-width="3"/><path d="M1356.0 620.2L1374.3 632.1L1393.3 643.2M1413.2 659.4L1435.1 666.5L1457.5 672.6L1479.7 678.8M1302.2 561.4L1321.3 574.5L1339.3 589.1L1357.3 603.6M1480.0 672.9L1501.4 684.2L1521.6 697.9L1541.0 713.0" fill="none" stroke="#fff" stroke-width="4"/><path d="M1458.3 659.0L1480.2 668.0L1501.6 678.1L1521.7 690.6L1541.0 704.5M1435.5 661.6L1457.5 671.4L1479.6 681.3L1501.2 692.3M1262.9 527.8L1282.8 540.3L1302.6 553.1L1321.8 566.7L1339.8 581.7L1357.8 596.7M1376.2 610.1L1395.0 624.2L1415.3 636.1L1436.8 645.6L1458.6 654.1M1338.8 596.7L1356.7 611.5L1374.8 625.8L1393.6 639.5L1414.0 650.8" fill="none" stroke="#fff" stroke-width="6"/><path d="M1301.4 577.2L1320.4 591.6L1338.1 607.6L1355.7 623.6M1394.2 632.7L1414.4 645.8L1435.9 656.2L1457.9 665.5L1479.9 674.8L1501.4 685.3M1338.2 604.9L1355.9 621.1L1373.9 637.1L1392.4 652.3L1412.7 665.0L1434.5 674.7L1456.8 683.2M1373.7 638.8L1392.4 653.1L1412.7 665.0L1434.6 673.9L1456.9 681.5M1357.1 605.9L1375.3 620.5L1394.1 634.5L1414.4 646.1L1436.0 655.1L1458.1 663.1M1393.0 646.0L1413.4 656.7L1435.3 664.5" fill="none" stroke="#fff" stroke-width="5"/><path d="M1356.0 620.2L1373.8 637.9L1392.3 654.0L1412.6 666.2" fill="none" stroke="#fff" stroke-width="3"/><linearGradient id="lg1" gradientUnits="userSpaceOnUse" x1="470" y1="700" x2="395" y2="890"><stop offset="0" stop-color="#c2c2c2"/><stop offset="0.45" stop-color="#cccccc"/><stop offset="1" stop-color="#ececec"/></linearGradient><path d="M735.0 262.0L733.2 261.1L730.9 259.7L728.1 258.1L724.6 256.8L720.3 256.3L715.0 257.0L708.2 259.2L699.9 262.6L690.8 266.8L681.5 271.3L672.7 275.8L665.0 280.0L658.5 283.8L652.7 287.6L647.4 291.4L642.4 295.3L637.3 299.1L632.0 303.0L626.5 306.9L621.0 310.7L615.6 314.6L610.1 318.5L604.6 322.6L599.0 327.0L593.4 331.6L587.7 336.3L582.0 341.2L576.3 346.3L570.6 351.6L565.0 357.0L559.4 362.6L553.9 368.4L548.4 374.4L542.9 380.6L537.4 386.8L532.0 393.0L526.5 399.4L521.0 405.9L515.5 412.6L510.1 419.2L504.9 425.7L500.0 432.0L495.4 438.0L491.1 443.7L486.9 449.2L482.9 454.9L479.0 460.8L475.0 467.0L471.0 473.7L467.1 480.9L463.2 488.2L459.4 495.6L455.6 502.9L452.0 510.0L448.5 516.8L445.0 523.4L441.6 529.9L438.3 536.4L435.1 543.1L432.0 550.0L429.0 557.2L426.0 564.6L423.2 572.2L420.4 579.8L417.7 587.4L415.0 595.0L412.4 602.6L409.9 610.2L407.4 617.8L404.9 625.4L402.5 632.8L400.0 640.0L397.5 646.8L394.9 653.3L392.4 659.7L389.9 666.1L387.4 672.8L385.0 680.0L382.7 687.8L380.4 695.9L378.2 704.4L376.0 713.0L374.0 721.6L372.0 730.0L370.1 738.3L368.3 746.7L366.5 755.0L364.9 763.3L363.3 771.7L362.0 780.0L360.8 788.4L359.8 797.0L358.9 805.6L358.2 814.1L357.5 822.2L357.0 830.0L356.6 837.7L356.3 845.6L356.2 853.1L356.1 860.0L356.1 865.8L356.0 870.0L362.0 880.0L366.2 876.2L372.1 870.9L379.0 864.6L386.4 857.8L393.6 851.1L400.0 845.0L405.6 839.3L410.9 833.6L416.0 828.0L421.1 822.5L426.4 817.1L432.0 812.0L437.7 807.2L443.4 802.7L449.2 798.3L455.5 794.0L462.3 789.6L470.0 785.0L478.9 780.3L488.8 775.6L499.4 770.8L510.1 765.9L520.4 760.6L530.0 755.0L539.0 749.0L548.0 742.8L556.6 736.2L564.6 729.4L571.8 722.4L578.0 715.0L582.8 707.2L586.4 699.1L589.2 690.6L591.6 682.0L594.1 673.4L597.0 665.0L600.4 656.6L603.8 648.0L607.3 639.4L610.9 630.9L614.4 622.8L618.0 615.0L621.6 607.8L625.3 601.1L628.9 594.7L632.6 588.3L636.3 581.8L640.0 575.0L643.6 567.8L647.1 560.4L650.6 552.8L654.2 545.2L658.0 537.6L662.0 530.0L666.4 522.5L671.1 514.9L676.0 507.4L680.9 499.9L685.6 492.4L690.0 485.0L694.0 477.7L697.7 470.5L701.3 463.3L704.8 456.2L708.3 449.1L712.0 442.0L715.9 434.9L720.0 427.9L724.1 420.8L728.0 413.8L731.7 406.9L735.0 400.0L737.8 393.4L740.3 387.3L742.5 381.1L744.5 374.7L746.3 367.8L748.0 360.0L749.6 350.5L751.0 339.3L752.3 327.5L753.4 316.3L754.3 306.8L755.0 300.0z" fill="url(#lg1)" stroke="#d8d8d8" stroke-width="12.0" stroke-linejoin="round" paint-order="stroke"/><path d="M578.8 543.4L568.0 558.9L558.3 575.0L549.2 591.4M503.5 577.9L494.5 594.6L486.6 611.8L478.4 628.9M519.8 542.7L511.3 560.1L502.8 577.4M689.8 283.6L673.7 293.6L658.0 304.7L642.5 316.5L626.5 327.7M659.7 361.6L646.8 375.5L634.5 389.9L622.7 404.8L610.9 419.8L599.1 435.0M591.2 347.4L576.3 360.2L561.9 373.7L548.1 387.7L534.6 402.0M548.2 440.7L536.6 456.3L525.2 472.0L514.1 488.0M404.9 734.0L397.5 750.7L390.4 767.7L383.8 785.1L378.1 802.9M498.3 474.4L486.3 489.6L475.3 505.5M672.8 478.2L663.1 494.6L653.6 511.0M593.6 349.7L578.4 362.2L563.7 375.3M497.2 620.2L490.9 638.7L482.8 656.1L473.7 672.5L464.1 688.2L453.6 703.3L442.8 717.6M592.8 530.8L582.3 546.5L572.0 562.3L562.6 578.6L553.9 595.3L545.4 612.1M635.5 494.4L625.6 510.5L616.5 527.0L607.5 543.5L597.9 559.8M668.1 370.2L655.9 384.7L644.5 399.8L633.5 415.2L622.5 430.8L611.3 446.4M721.9 373.7L712.8 390.0L702.7 405.6L692.5 421.4L683.1 437.6M741.5 299.0L734.7 314.3L727.9 330.2M688.4 391.0L677.7 406.6L667.9 422.6L658.3 438.9L648.4 455.2L638.1 471.3M637.7 393.1L626.5 408.5L615.4 424.1L604.3 439.9L593.3 455.8L583.0 472.1" fill="none" stroke="#fff" stroke-width="4"/><path d="M519.1 566.5L511.2 584.2L503.8 602.2M673.3 321.2L659.7 334.4L645.4 347.0L631.3 359.9L617.8 373.5M701.8 298.4L688.8 310.7L675.9 324.0M583.1 446.5L571.5 461.7L560.4 477.4L549.5 493.1L538.6 509.0L528.3 525.3L519.0 542.1M655.3 461.8L643.6 476.4L631.8 491.1M474.6 578.7L468.9 597.8L463.1 617.0L456.4 635.4L449.2 653.3" fill="none" stroke="#ddd" stroke-width="2"/><path d="M546.7 682.4L536.1 697.7L523.6 711.4L510.2 723.9L496.2 735.7L481.5 746.4M504.1 427.6L493.0 444.0L482.4 460.8L473.0 478.3L464.6 496.5M399.5 773.7L391.4 790.1L384.2 807.0L377.7 824.2L371.1 841.0M567.5 432.1L555.1 446.9L543.1 462.1L531.4 477.4M635.7 544.0L628.5 561.8L620.5 579.2L612.4 596.5M501.6 647.1L492.1 663.4L481.7 678.7L470.6 693.3L458.9 707.3M457.6 791.3L442.3 802.1L428.0 814.1L414.9 827.5L402.3 841.2L389.0 854.3L375.4 867.0M625.5 583.5L616.6 600.2L608.8 617.3L601.7 634.8L595.0 652.5L588.9 670.4L584.0 688.7M681.9 461.6L673.1 478.5L663.6 495.0M739.6 344.6L733.4 361.3L725.5 377.6L716.2 393.5L705.6 408.6L694.9 423.8M732.8 385.5L724.7 402.4L715.4 418.7L706.0 435.0M595.8 533.4L585.8 549.5L576.1 565.7L567.3 582.5L559.2 599.7M518.2 440.1L506.1 455.4L494.4 471.1L483.7 487.5L474.1 504.4L464.7 521.6M623.7 581.9L614.1 598.0L605.5 614.5L597.7 631.5L590.2 648.6M721.3 322.2L711.6 336.5L701.0 351.1L689.6 365.6M551.6 617.1L545.1 635.3L539.8 653.8L533.4 672.0L524.0 688.3L513.0 703.1M518.9 614.2L513.0 632.7L506.4 650.8L497.6 667.7L487.6 683.3M466.5 547.8L458.0 565.4L450.6 583.4L443.5 601.6M492.3 616.3L485.8 634.7L477.7 652.1L468.8 668.7M700.2 403.2L690.7 419.6L682.1 436.6L673.7 453.8M667.2 472.9L657.0 488.9L646.9 504.9L637.7 521.4L629.4 538.4L621.2 555.5" fill="none" stroke="#fff" stroke-width="3"/><path d="M470.4 526.3L462.7 544.7L455.5 563.4L449.4 582.5M400.2 730.7L393.3 747.8L386.6 765.2L380.5 782.9M716.8 289.4L704.3 301.4L691.5 313.8M571.7 487.3L561.8 503.9L551.9 520.4L542.4 537.2L534.0 554.6M718.2 259.4L700.2 266.4L682.9 275.1M395.9 705.5L390.1 723.7L384.6 742.0M557.0 644.9L550.7 662.4L543.0 679.5L532.1 694.7L519.5 708.2L506.1 720.8M605.4 590.6L597.8 608.1L591.0 626.0L584.5 643.9L578.5 662.1L573.9 680.7M715.5 287.6L702.5 299.2L689.3 311.2L676.0 324.1L662.5 337.4M722.9 267.4L707.3 276.3L692.3 286.6L677.3 297.6L662.8 309.9M411.2 694.2L404.1 711.5L397.5 728.8L391.1 746.4" fill="none" stroke="#ddd" stroke-width="4"/><path d="M541.4 408.2L529.3 423.7L517.7 439.6L506.4 455.7M533.7 453.7L523.5 470.5L513.6 487.6M749.4 334.6L746.0 352.5L741.1 370.0L734.1 386.9L725.5 403.3M744.5 303.9L738.3 319.3L731.8 335.0L724.1 350.7L714.9 366.2M444.5 529.9L437.2 548.7L431.0 568.0L425.6 587.6" fill="none" stroke="#ddd" stroke-width="3"/><path d="M633.2 361.8L620.0 375.7L607.3 390.0L594.8 404.7L582.4 419.6M653.2 485.3L643.9 502.1L635.6 519.5L628.2 537.3M647.4 402.5L636.3 417.9L625.2 433.4L613.9 448.8L602.8 464.5L592.3 480.5M520.1 708.7L507.0 721.5L493.2 733.5L478.9 744.5M695.7 372.0L684.3 386.9L673.1 401.9L662.6 417.4L652.4 433.3L641.9 449.1L631.0 464.7M747.3 285.3L738.9 294.5L730.3 308.2L721.5 322.5L711.9 336.9L701.3 351.5M701.5 268.2L685.0 277.7L668.9 288.1L653.6 299.9M476.7 651.3L468.2 668.2L459.1 684.3L449.1 699.8L438.8 714.7" fill="none" stroke="#fff" stroke-width="2"/><path d="M378.2 715.4L374.4 735.1L370.6 754.6M388.8 766.7L381.9 783.9L376.1 801.6M497.4 714.1L484.4 726.7L470.8 738.5M661.1 415.9L651.0 432.0L640.7 448.0M538.4 533.8L529.1 550.5L520.3 567.5M393.5 813.2L385.3 829.4L376.7 845.2M573.8 463.8L564.1 480.6L554.6 497.6M576.2 660.2L571.4 678.8L564.9 696.6M558.1 622.4L549.2 638.6L541.5 655.2M515.4 514.3L504.3 529.8L493.7 545.5M528.6 423.1L517.4 439.3L506.5 455.8M401.1 663.2L392.6 680.3L385.4 698.0M601.2 437.0L590.7 453.4L581.0 470.3M569.4 608.1L563.7 627.0L558.5 646.0" fill="none" stroke="#555" stroke-width="4"/><path d="M660.9 441.5L648.7 455.5L635.8 469.2M644.2 345.8L629.2 357.8L614.7 370.5M504.4 763.4L487.0 771.1L470.0 779.2M387.3 830.8L378.4 846.4L369.3 861.7M701.0 455.1L691.5 470.9L681.2 486.2M431.9 686.7L423.4 703.2L415.4 719.6M525.8 472.5L513.5 487.5L502.0 503.0M413.2 625.2L407.8 644.6L401.5 663.5M586.0 342.3L570.3 354.5L555.3 367.5M612.8 620.7L603.6 636.4L594.7 652.3M536.3 651.1L528.3 668.0L517.6 683.3M430.9 752.0L420.0 765.9L409.7 780.5M725.8 378.0L717.6 395.0L708.3 411.4M380.8 783.1L375.6 801.3L371.0 819.5M653.4 460.0L641.9 474.9L630.5 489.9M510.1 723.9L497.4 736.6L483.8 748.1M441.6 780.5L429.4 793.5L417.8 807.4M747.9 309.6L744.2 327.5L740.5 345.8M426.2 611.8L420.2 630.7L413.9 649.3M574.6 358.6L560.9 372.7L547.6 387.3M613.9 369.6L602.6 385.5L591.9 401.9M539.8 583.7L531.2 600.5L523.0 617.5M518.6 541.8L509.4 558.5L500.2 575.3M478.0 675.8L468.4 691.6L458.0 706.6M651.9 458.5L640.6 473.6L629.4 488.8M681.4 273.3L664.1 282.7L647.8 293.7M530.6 716.9L516.9 729.2L502.6 740.6M606.8 493.5L596.5 509.2L586.2 525.1M472.4 760.6L457.5 770.5L443.3 781.6M411.5 825.2L400.1 839.7L387.8 853.4M492.3 754.5L475.6 762.9L459.5 771.9M630.1 385.6L618.8 401.1L607.7 416.8M660.1 466.3L649.6 482.0L639.1 497.7M414.6 740.7L405.5 756.1L396.9 772.0M461.6 592.1L453.1 609.1L444.0 625.7M366.9 795.5L363.3 814.2L360.2 832.9" fill="none" stroke="#555" stroke-width="3"/><path d="M738.3 319.3L732.4 335.8L725.5 352.4M585.1 368.7L572.6 383.8L560.6 399.3M508.5 722.7L494.1 734.1L479.1 744.6M595.2 457.5L584.6 473.5L574.6 489.9M434.7 797.1L421.9 810.1L410.2 824.3M590.9 578.3L582.5 595.3L574.9 612.7M579.2 442.8L567.6 458.2L556.5 473.9M655.3 487.3L646.1 504.1L637.8 521.5M380.2 825.9L373.0 842.4L366.0 858.8M746.7 284.3L738.5 293.8L730.5 308.5" fill="none" stroke="#666" stroke-width="2"/><path d="M673.5 293.3L658.1 304.8L642.9 316.9M413.4 761.4L404.7 777.2L396.6 793.5M679.0 327.4L667.3 342.4L655.1 356.9M391.2 768.2L384.7 785.7L379.0 803.5M395.0 727.1L388.4 744.6L382.2 762.3M598.9 511.4L589.6 528.0L579.9 544.4M625.7 583.6L615.8 599.5L607.0 615.8M520.3 591.6L512.6 609.2L506.2 627.3M481.5 535.5L474.0 554.0L467.1 572.7M383.9 741.5L378.0 759.5L372.7 777.8M654.8 461.3L644.5 477.3L634.3 493.3M473.3 761.2L458.6 771.3L444.5 782.5M750.9 336.7L747.6 354.5L742.7 371.8M448.9 785.4L435.2 797.3L422.2 810.3M684.9 489.7L675.7 506.3L666.3 522.6M743.7 278.5L732.5 283.7L721.2 295.5M696.7 292.1L681.7 302.6L666.7 314.1M744.4 279.8L733.4 285.1L722.0 296.6" fill="none" stroke="#666" stroke-width="3"/><path d="M439.8 758.2L429.1 772.0L418.7 786.4M539.7 509.9L529.2 526.0L519.7 542.7M411.2 803.1L400.5 817.8L390.3 832.9M384.3 785.4L378.2 803.0L372.7 820.7M567.7 630.2L558.8 646.3L551.1 662.7" fill="none" stroke="#666" stroke-width="4"/><path d="M475.4 762.7L460.9 772.9L447.0 784.1M682.7 303.8L667.6 315.1L652.3 326.7M371.9 798.8L368.2 817.6L364.5 836.1M404.7 711.8L398.5 729.5L392.5 747.3M548.9 615.0L539.5 630.8L531.3 647.1M728.7 381.1L720.5 398.0L711.1 414.3M482.6 632.2L475.6 650.4L467.7 667.8M579.3 416.6L566.1 430.9L553.3 445.4M512.5 561.1L506.0 580.0L500.1 599.1M547.0 386.6L533.0 400.6L519.3 414.7M420.6 744.9L410.7 759.6L401.4 775.0M451.5 745.5L440.0 758.4L429.0 771.9M575.8 589.7L570.3 608.9L565.1 628.2M623.3 483.2L612.2 498.4L601.9 514.0" fill="none" stroke="#555" stroke-width="2"/><path d="M374.3 821.8L368.9 839.4L363.6 856.7M404.9 666.1L398.3 684.6L392.7 703.2M440.5 623.0L435.0 642.3L429.1 661.0M442.3 802.1L428.1 814.2L415.2 827.6M535.6 673.6L525.6 689.5L513.9 703.9M407.2 620.5L400.4 638.8L393.3 657.3L386.4 675.7M386.1 830.0L377.7 845.9L369.0 861.4M389.3 810.4L381.4 826.8L373.6 842.8M439.9 598.8L432.3 616.6L424.8 634.3M517.0 751.6L500.9 760.8L484.5 769.2M399.1 795.1L391.0 811.5L383.3 828.0L375.3 844.1M514.7 727.4L501.0 739.4L486.6 750.2M436.1 666.5L426.4 682.5L416.7 698.3L407.9 714.2M403.7 820.0L393.7 835.3L383.0 849.9M396.3 815.1L387.3 830.8L378.1 846.2L368.9 861.3" fill="none" stroke="#aaa" stroke-width="3"/><path d="M429.6 793.6L416.9 806.8L405.5 821.2M362.9 792.8L360.3 812.1L358.2 831.4L356.9 850.9M385.8 764.7L380.0 782.6L375.0 800.9M391.4 768.4L383.9 785.1L377.4 802.5M543.6 727.0L527.3 737.2L510.6 746.8M444.3 782.3L430.4 794.2L417.5 807.2M439.8 622.5L433.4 641.0L426.5 659.1M552.8 710.8L538.7 723.2L523.7 734.4M377.7 824.2L370.9 840.8L364.5 857.5M397.5 706.7L391.0 724.3L384.9 742.2M479.5 765.7L463.7 774.8L448.7 785.3M434.8 642.1L425.6 658.4L415.8 674.4L406.1 690.4M398.0 729.2L390.4 745.9L383.4 763.1M408.6 668.9L399.8 685.7L392.2 702.9M425.8 682.0L414.8 696.8L404.9 712.0M388.8 744.8L382.8 762.7L377.3 780.8M384.9 829.2L376.0 844.6L367.4 860.0M502.4 694.9L489.8 708.1L476.5 720.7M390.5 767.8L383.9 785.1L378.1 803.0L372.9 820.9M382.7 806.0L376.2 823.1L369.8 840.0M455.4 610.9L446.5 627.7L437.6 644.3M430.3 615.0L421.7 631.8L413.1 648.7M374.9 735.5L371.0 754.9L367.3 774.3M452.6 724.9L439.4 736.8L426.9 749.3" fill="none" stroke="#555" stroke-width="3"/><path d="M423.7 609.8L417.9 628.9L411.9 647.8L405.0 666.2M390.8 746.1L384.4 763.7L378.5 781.6M402.2 710.1L396.1 727.9L390.3 745.8" fill="none" stroke="#555" stroke-width="2"/><path d="M473.3 672.1L463.0 687.4L452.1 702.1M414.8 626.5L406.8 643.8L398.2 661.0M465.7 776.2L450.4 786.4L435.8 797.8L422.3 810.4M394.6 726.8L388.3 744.5L382.2 762.3M388.6 744.7L382.5 762.5L376.9 780.6" fill="none" stroke="#aaa" stroke-width="2"/><path d="M733.0 262.0L762.0 270.0L764.0 330.0L752.0 375.0L736.0 375.0L738.0 300.0z" fill="#aaa" /><path d="M712.0 264.0L707.0 266.4L700.0 269.8L691.8 273.8L683.1 278.1L674.9 282.3L668.0 286.0L662.4 289.3L657.5 292.4L653.0 295.4L648.7 298.5L644.5 301.6L640.0 305.0L635.3 308.6L630.6 312.2L625.9 316.0L621.3 319.9L616.6 323.9L612.0 328.0L607.4 332.2L602.9 336.6L598.3 341.1L593.8 345.6L589.4 350.3L585.0 355.0L580.7 359.8L576.5 364.7L572.4 369.6L568.3 374.7L564.1 379.8L560.0 385.0L555.8 390.3L551.6 395.8L547.4 401.4L543.2 407.0L539.1 412.5L535.0 418.0L531.0 423.4L527.1 428.6L523.3 433.9L519.5 439.1L515.8 444.5L512.0 450.0L508.3 455.6L504.6 461.3L500.9 467.0L497.3 472.9L493.7 478.8L490.0 485.0L486.1 491.8L481.9 499.4L477.6 507.2L473.7 514.4L470.4 520.6L468.0 525.0" fill="none" stroke="#fff" stroke-width="7.0" stroke-linecap="round"/><path d="M700.7 264.4L706.1 262.8L713.4 260.5L721.9 257.8L731.3 255.0L741.0 252.6L750.4 251.0L759.9 249.9L769.9 249.3L780.2 249.1L790.8 249.0L801.5 249.0L812.0 249.0L822.3 249.0L832.4 249.1L842.6 249.3L853.0 249.6L863.7 249.8L875.0 250.0L886.8 250.1L899.1 250.2L911.7 250.3L924.5 250.4L937.3 250.7L949.9 251.0L962.5 251.3L975.1 251.6L987.7 251.9L1000.2 252.5L1012.6 253.3L1024.7 254.5L1036.5 256.0L1048.1 257.8L1059.6 259.8L1071.0 262.2L1082.6 264.9L1094.5 267.9L1106.6 271.5L1119.0 275.7L1131.5 280.1L1144.1 284.8L1156.8 289.4L1169.3 293.9L1182.1 298.3L1195.3 302.8L1208.4 307.3L1221.2 311.7L1233.3 316.0L1244.3 319.9L1254.1 323.4L1262.8 326.5L1270.9 329.5L1278.5 332.4L1286.2 335.5L1294.2 338.8L1302.5 342.6L1310.8 346.4L1319.0 350.5L1327.3 354.6L1335.6 358.9L1343.8 363.2L1352.0 367.6L1360.0 371.9L1367.9 376.3L1376.0 380.9L1384.5 386.0L1393.4 391.5L1403.1 398.0L1413.5 405.3L1424.3 412.9L1435.0 420.6L1445.2 428.0L1454.4 434.7L1463.1 440.9L1471.6 447.1L1479.6 453.0L1486.7 458.3L1492.6 462.7L1497.1 466.0L1502.9 458.0L1498.4 454.8L1492.4 450.5L1485.2 445.3L1477.1 439.5L1468.4 433.4L1459.6 427.3L1450.1 421.0L1439.6 414.0L1428.6 406.7L1417.4 399.5L1406.6 392.6L1396.6 386.5L1387.5 381.0L1378.9 376.0L1370.6 371.5L1362.5 367.2L1354.4 363.0L1346.2 358.8L1337.8 354.6L1329.4 350.4L1321.0 346.4L1312.6 342.5L1304.2 338.8L1295.8 335.2L1287.7 331.8L1280.0 328.7L1272.3 325.8L1264.2 322.8L1255.5 319.6L1245.7 316.1L1234.6 312.2L1222.5 308.0L1209.7 303.5L1196.6 299.0L1183.4 294.5L1170.7 290.1L1158.1 285.6L1145.5 281.0L1132.9 276.4L1120.3 271.9L1107.8 267.7L1095.5 264.1L1083.6 260.8L1072.0 258.0L1060.4 255.4L1048.9 253.2L1037.3 251.2L1025.3 249.5L1013.0 248.1L1000.5 247.2L987.9 246.4L975.3 245.9L962.6 245.5L950.1 245.0L937.4 244.7L924.6 244.4L911.8 244.3L899.1 244.2L886.8 244.1L875.0 244.0L863.9 243.8L853.1 243.6L842.8 243.3L832.5 243.1L822.3 243.0L812.0 243.0L801.5 243.0L790.8 243.0L780.1 243.1L769.6 243.3L759.4 243.9L749.6 245.0L739.8 247.0L729.8 249.6L720.3 252.5L711.7 255.4L704.5 257.9L699.3 259.6z" fill="#555" /><path d="M1000.0 322.0L1001.8 322.8L1004.1 323.8L1006.9 325.1L1010.4 326.5L1014.7 328.2L1020.0 330.0L1026.6 332.1L1034.4 334.4L1043.1 336.9L1052.2 339.6L1061.3 342.3L1070.0 345.0L1078.3 347.6L1086.7 350.3L1095.0 353.0L1103.3 355.8L1111.7 358.8L1120.0 362.0L1128.3 365.5L1136.7 369.3L1145.0 373.2L1153.3 377.2L1161.7 381.2L1170.0 385.0L1178.3 388.7L1186.7 392.2L1195.0 395.7L1203.3 399.3L1211.7 403.0L1220.0 407.0L1228.5 411.4L1237.1 416.2L1245.8 421.1L1254.3 426.0L1262.4 430.7L1270.0 435.0L1276.7 438.6L1282.7 441.7L1288.3 444.6L1294.0 447.5L1300.1 450.9L1307.0 455.0L1314.8 459.8L1323.2 465.2L1332.1 470.9L1341.2 477.0L1350.6 483.4L1360.0 490.0L1369.6 496.8L1379.5 503.9L1389.6 511.2L1399.7 518.9L1409.9 526.8L1420.0 535.0L1430.7 544.2L1442.2 554.6L1453.8 565.3L1464.4 575.4L1473.5 583.9L1480.0 590.0" fill="none" stroke="#555" stroke-width="4.5" stroke-linecap="round" stroke-dasharray="16 4 7 4"/><path d="M1080.0 420.0L1085.3 421.5L1092.6 423.5L1101.2 425.9L1110.7 428.7L1120.5 431.7L1130.0 435.0L1139.5 438.5L1149.6 442.4L1160.0 446.6L1170.4 450.9L1180.5 455.4L1190.0 460.0L1198.9 464.7L1207.4 469.4L1215.6 474.4L1223.7 479.4L1231.8 484.7L1240.0 490.0L1248.3 495.5L1256.7 501.3L1265.0 507.2L1273.3 513.1L1281.7 519.1L1290.0 525.0L1298.3 530.8L1306.7 536.5L1315.0 542.2L1323.3 548.0L1331.7 553.9L1340.0 560.0L1348.3 566.3L1356.7 572.8L1365.0 579.4L1373.3 586.1L1381.7 593.0L1390.0 600.0L1398.9 607.7L1408.5 616.3L1418.1 625.0L1427.0 633.1L1434.6 640.0L1440.0 645.0" fill="none" stroke="#555" stroke-width="4.0" stroke-linecap="round" stroke-dasharray="8 4 12 5"/><path d="M1290.0 400.0L1295.4 403.2L1303.0 407.7L1311.9 413.0L1321.5 418.7L1331.1 424.5L1340.0 430.0L1348.3 435.1L1356.7 440.3L1365.0 445.5L1373.3 450.8L1381.7 456.3L1390.0 462.0L1398.2 467.8L1406.3 473.8L1414.4 479.9L1422.6 486.2L1431.1 492.9L1440.0 500.0L1450.1 508.2L1461.5 517.6L1473.1 527.4L1484.1 536.6L1493.4 544.4L1500.0 550.0" fill="none" stroke="#555" stroke-width="4.0" stroke-linecap="round" stroke-dasharray="9 4 5 5"/><path d="M1010.0 364.0L1015.6 364.9L1023.3 366.1L1032.5 367.5L1042.2 369.0L1051.7 370.6L1060.0 372.0L1067.2 373.3L1074.1 374.5L1080.6 375.8L1087.0 377.0L1093.4 378.4L1100.0 380.0L1107.1 381.9L1114.8 384.1L1122.5 386.5L1129.6 388.7L1135.6 390.6L1140.0 392.0" fill="none" stroke="#555" stroke-width="4.0" stroke-linecap="round" stroke-dasharray="10 4"/><path d="M1140.0 325.0L1142.5 324.2L1145.8 322.9L1150.0 321.6L1154.7 320.8L1160.0 321.0L1166.0 322.4L1172.8 324.6L1180.1 327.5L1187.6 330.7L1195.0 334.0L1202.6 337.7L1210.8 341.9L1218.8 346.2L1226.0 350.4L1232.0 354.0L1236.9 357.0L1241.2 359.7L1244.4 362.1L1246.1 364.2L1246.0 366.0L1243.6 367.7L1239.1 369.4L1233.2 370.6L1226.6 371.3L1220.0 371.0L1213.1 369.6L1205.4 367.3L1197.3 364.4L1189.4 361.1L1182.0 358.0L1174.9 354.8L1167.7 351.4L1160.9 347.9L1154.9 344.4L1150.0 341.0L1146.4 337.5L1143.9 333.8L1142.2 330.2L1141.0 327.2z" fill="#555" /><path d="M745.0 300.0L753.5 302.3L765.0 305.5L778.8 309.2L793.9 313.4L809.6 317.7L825.0 322.0L840.8 326.5L857.8 331.5L875.3 336.6L892.8 341.6L909.5 346.2L925.0 350.0L938.7 352.6L950.9 354.2L962.5 355.4L974.1 356.7L986.3 358.7L1000.0 362.0L1015.5 366.8L1032.2 372.7L1049.7 379.2L1067.2 386.2L1084.2 393.2L1100.0 400.0L1114.7 406.4L1128.9 412.8L1142.5 419.2L1155.6 425.9L1168.1 432.7L1180.0 440.0L1191.9 448.3L1203.7 457.8L1215.0 467.5L1225.2 476.7L1233.7 484.4L1240.0 490.0L1232.0 528.0L1225.3 525.2L1216.2 521.5L1205.4 517.0L1193.6 511.9L1181.5 506.1L1170.0 500.0L1159.1 493.0L1148.4 485.0L1137.4 476.4L1125.9 467.8L1113.5 459.5L1100.0 452.0L1085.1 445.4L1068.9 439.3L1051.9 433.6L1034.4 428.0L1017.0 422.6L1000.0 417.0L983.3 411.4L966.7 405.8L950.0 400.3L933.3 394.9L916.7 389.4L900.0 384.0L882.8 378.4L865.0 372.7L847.2 367.0L830.0 361.5L814.1 356.5L800.0 352.0L787.6 348.1L776.3 344.6L766.2 341.5L757.6 338.9L750.5 336.7L745.0 335.0z" fill="#878787" /><path d="M952.0 394.4L965.0 397.7L978.1 401.0M977.7 403.0L990.6 407.3L1003.4 411.6L1016.3 415.8L1029.2 420.0L1042.1 424.2L1054.9 428.5L1067.7 433.0L1080.4 437.8M1133.7 441.5L1145.4 448.3L1156.9 455.4L1168.4 462.7M1044.8 411.0L1057.7 415.3L1070.5 419.8L1083.2 424.6L1095.8 429.7L1108.2 435.2L1120.3 441.3L1132.0 448.1M849.6 349.5L862.6 353.7L875.7 357.8L888.7 361.9L901.7 365.9L914.8 369.8M1006.3 396.8L1019.2 401.1L1032.1 405.4L1045.0 409.8L1057.9 414.4L1070.6 419.1M1129.7 457.2L1140.7 465.1L1151.7 473.3L1162.7 481.3L1174.0 488.9L1185.7 495.9L1197.5 502.4" fill="none" stroke="#555" stroke-width="3"/><path d="M1022.8 382.7L1035.8 387.1L1048.8 391.6L1061.6 396.2L1074.4 401.1L1087.2 406.1L1099.8 411.3M1137.9 475.6L1148.6 483.5L1159.6 491.3M914.1 375.4L927.1 379.1L940.2 382.5L953.4 385.7L966.5 388.9L979.6 392.3" fill="none" stroke="#fff" stroke-width="3"/><path d="M758.0 333.8L770.9 337.8L783.9 341.8L796.9 345.9M980.0 390.4L993.0 394.2L1006.0 398.3L1018.9 402.5L1031.9 406.7L1044.8 411.0L1057.6 415.4L1070.5 420.0M981.4 382.6L994.5 386.3L1007.5 390.5L1020.5 394.8" fill="none" stroke="#ccc" stroke-width="3"/><path d="M989.8 411.3L1002.7 415.4L1015.6 419.4L1028.5 423.3L1041.5 427.2L1054.4 431.1L1067.2 435.3L1079.9 439.8M784.7 317.1L797.9 320.7L811.1 324.4L824.4 328.0L837.6 331.7L850.8 335.5L863.9 339.3M1074.7 399.9L1087.4 405.0L1100.0 410.3L1112.6 415.8L1125.0 421.6L1137.3 427.7L1149.3 434.1L1161.2 440.9L1172.9 448.0M822.7 354.9L835.6 359.1L848.5 363.2L861.4 367.3M1043.1 419.3L1056.0 423.4L1068.8 427.6L1081.6 432.2L1094.2 437.1" fill="none" stroke="#bbb" stroke-width="4"/><path d="M1088.0 402.0L1100.7 407.2L1113.3 412.6L1125.8 418.2M1081.7 431.7L1094.2 437.2L1106.4 443.2L1118.2 449.9L1129.6 457.3L1140.7 465.3" fill="none" stroke="#fff" stroke-width="2"/><path d="M1057.1 418.0L1069.9 422.4L1082.7 427.1L1095.3 432.1L1107.6 437.6L1119.7 443.8L1131.4 450.5M745.0 322.8L758.0 326.8L771.1 330.8L784.1 334.8L797.2 338.9L810.2 343.0L823.2 347.1L836.2 351.2M1172.3 494.4L1184.1 501.0L1196.2 507.0L1208.3 512.8L1220.6 518.4M978.4 399.4L991.3 403.6L1004.1 408.0L1017.0 412.4L1029.9 416.7M901.7 366.2L914.8 369.9L927.9 373.4L941.2 376.5L954.4 379.4L967.7 382.1M901.8 365.6L914.9 369.3L928.0 372.9M1091.8 447.7L1104.0 453.8L1115.6 460.8L1126.8 468.5L1137.6 476.6L1148.2 484.9M874.6 368.1L887.6 372.3L900.5 376.5L913.4 380.6L926.4 384.7L939.3 388.7L952.3 392.5L965.3 396.4L978.2 400.4M1174.1 444.2L1185.5 452.1L1196.5 460.5L1207.2 469.1L1217.8 478.0" fill="none" stroke="#bbb" stroke-width="3"/><path d="M861.8 363.4L874.7 367.6L887.6 371.9L900.5 376.1L913.5 380.3L926.4 384.4L939.4 388.4L952.3 392.3M1093.5 440.3L1105.7 446.3L1117.5 453.1L1128.8 460.6L1139.8 468.6L1150.6 476.9M862.3 357.4L875.3 361.6L888.3 365.9L901.2 370.1" fill="none" stroke="#ccc" stroke-width="2"/><path d="M771.5 309.5L784.8 313.4L798.1 317.3L811.3 321.3" fill="none" stroke="#555" stroke-width="2"/><path d="M771.0 333.2L784.1 337.0L797.1 340.8L810.1 344.6L823.1 348.4L836.1 352.3L849.1 356.2L862.1 360.1L875.0 364.0" fill="none" stroke="#bbb" stroke-width="2"/><path d="M851.2 330.6L864.4 334.2L877.7 337.8M902.9 356.5L916.1 359.9L929.4 363.1L942.8 365.6L956.3 367.7L969.8 369.7" fill="none" stroke="#ccc" stroke-width="4"/><path d="M985.1 362.0L998.4 365.2L1011.6 369.1L1024.7 373.4L1037.7 378.0L1050.6 382.7L1063.4 387.6L1076.2 392.7M1144.8 450.6L1156.2 458.0L1167.6 465.4L1179.0 472.9L1190.5 480.2L1201.9 487.4L1213.3 494.6L1224.6 501.7" fill="none" stroke="#555" stroke-width="4"/><path d="M1041.6 426.6L1054.4 430.9L1067.2 435.4L1079.8 440.2L1092.3 445.5L1104.5 451.4L1116.2 458.2L1127.4 465.9M951.1 399.8L963.9 404.2L976.7 408.6L989.5 413.0L1002.3 417.5L1015.1 421.8" fill="none" stroke="#fff" stroke-width="4"/><path d="M728.0 262.0L733.1 263.2L740.1 264.9L748.4 266.8L757.4 268.9L766.4 271.0L775.0 273.0L782.9 274.9L790.5 276.8L798.2 278.7L806.4 280.6L815.2 282.3L825.0 284.0L836.6 285.4L850.0 286.6L864.1 287.6L877.8 288.8L890.1 290.2L900.0 292.0L907.1 294.4L912.0 297.2L915.6 300.3L918.5 303.4L921.4 306.4L925.0 309.0L929.2 311.1L933.3 312.8L937.5 314.3L941.7 315.9L945.8 317.7L950.0 320.0L954.1 322.9L958.2 326.1L962.3 329.7L966.4 333.3L970.7 336.8L975.0 340.0L979.8 343.1L985.1 346.2L990.6 349.2L995.6 352.0L999.9 354.3L1003.0 356.0L1003.0 362.0L1000.2 362.0L996.6 362.1L992.1 362.1L987.0 362.0L981.3 361.7L975.0 361.0L967.9 359.9L960.0 358.4L951.4 356.6L942.5 354.7L933.6 352.8L925.0 351.0L916.7 349.3L908.3 347.6L900.0 345.9L891.7 344.1L883.3 342.2L875.0 340.0L866.7 337.5L858.3 334.6L850.0 331.6L841.7 328.5L833.3 325.6L825.0 323.0L816.6 320.7L808.0 318.7L799.4 316.8L790.9 314.9L782.8 313.0L775.0 311.0L767.3 308.7L759.4 306.3L751.9 303.8L745.0 301.4L739.2 299.4L735.0 298.0z" fill="#555" /><path d="M743.4 338.2L749.5 340.5L757.8 343.7L767.7 347.5L778.4 351.4L788.8 355.3L798.4 358.7L807.1 361.6L815.5 364.4L823.8 367.0L832.0 369.6L840.2 372.1L848.5 374.8L856.8 377.5L865.1 380.2L873.4 382.9L881.7 385.7L890.0 388.4L898.3 391.2L906.6 394.0L914.9 396.8L923.2 399.6L931.5 402.5L939.9 405.4L948.2 408.2L956.7 410.9L965.4 413.7L974.0 416.4L982.5 419.1L990.7 421.8L998.5 424.3L1006.3 426.6L1014.3 429.0L1022.0 431.4L1028.9 433.5L1034.8 435.2L1039.2 436.4L1040.8 431.6L1036.7 429.8L1031.1 427.5L1024.3 424.8L1016.8 421.8L1009.1 418.7L1001.5 415.7L993.8 412.9L985.6 410.0L977.2 407.0L968.7 403.9L960.2 400.8L951.8 397.8L943.4 395.0L935.1 392.1L926.8 389.2L918.4 386.4L910.1 383.6L901.7 380.8L893.3 378.1L885.0 375.5L876.6 372.9L868.2 370.4L859.9 367.8L851.5 365.2L843.2 362.6L835.0 360.0L826.8 357.5L818.6 354.9L810.2 352.2L801.6 349.3L792.1 346.0L781.6 342.3L771.0 338.5L761.1 335.0L752.6 331.9L746.6 329.8z" fill="#555" /><path d="M998.3 424.7L1003.7 426.8L1011.1 429.7L1020.0 433.1L1029.6 436.7L1039.1 440.3L1048.0 443.7L1056.4 446.5L1064.8 449.4L1073.1 452.1L1081.4 454.9L1089.7 457.7L1098.0 460.7L1106.4 463.5L1114.8 466.2L1123.1 469.0L1131.4 471.9L1139.6 475.0L1147.9 478.5L1156.3 482.5L1165.0 486.9L1173.7 491.5L1182.2 496.3L1190.4 501.0L1197.9 505.4L1205.1 509.7L1212.1 514.2L1218.8 518.7L1224.9 522.8L1230.0 526.2L1233.8 528.6L1236.2 525.4L1232.8 522.4L1228.1 518.5L1222.4 513.8L1216.0 508.8L1209.2 503.6L1202.1 498.6L1194.7 493.8L1186.6 488.8L1178.2 483.7L1169.4 478.7L1160.7 473.9L1152.1 469.5L1143.7 465.5L1135.3 462.0L1126.9 458.6L1118.5 455.5L1110.3 452.4L1102.0 449.3L1093.6 446.4L1085.3 443.5L1076.9 440.7L1068.6 438.0L1060.3 435.2L1052.0 432.3L1043.0 429.4L1033.4 426.1L1023.7 422.8L1014.8 419.7L1007.2 417.1L1001.7 415.3z" fill="#868686" /><path d="M1040.0 434.0L1046.6 436.3L1055.9 439.5L1066.9 443.3L1078.5 447.4L1089.9 451.4L1100.0 455.0L1108.9 458.2L1117.4 461.1L1125.6 464.1L1133.7 467.1L1141.8 470.3L1150.0 474.0L1158.5 478.2L1167.2 482.8L1175.9 487.6L1184.4 492.6L1192.5 497.4L1200.0 502.0L1207.1 506.6L1214.1 511.5L1220.6 516.2L1226.5 520.6L1231.4 524.3L1235.0 527.0" fill="none" stroke="#555" stroke-width="3.0" stroke-linecap="round" stroke-dasharray="9 5 4 6"/><path d="M741.0 351.0L745.2 352.3L751.0 353.9L757.9 355.8L765.4 358.1L773.3 360.9L781.0 364.0L789.0 367.8L797.9 372.4L806.9 377.4L815.8 382.4L824.0 387.0L831.0 391.0L836.3 394.1L840.3 396.7L843.5 398.9L846.7 401.1L850.7 403.3L856.0 406.0L862.9 409.0L870.8 412.3L879.4 415.7L888.4 419.1L897.4 422.6L906.0 426.0L914.3 429.3L922.7 432.7L931.0 436.0L939.3 439.3L947.7 442.7L956.0 446.0L964.3 449.4L972.7 452.9L981.0 456.4L989.3 459.9L997.7 463.1L1006.0 466.0L1014.6 468.5L1023.6 470.6L1032.6 472.5L1041.2 474.4L1049.1 476.5L1056.0 479.0L1061.7 482.0L1066.5 485.5L1070.6 489.1L1074.2 492.7L1077.6 496.1L1081.0 499.0L1084.5 501.5L1087.9 503.7L1091.1 505.8L1093.9 507.5L1096.2 508.9L1098.0 510.0L1092.0 538.0L1090.9 538.1L1089.6 538.2L1087.9 538.4L1085.8 538.4L1083.2 538.3L1080.0 538.0L1076.3 537.4L1072.1 536.6L1067.4 535.6L1062.1 534.5L1056.4 533.3L1050.0 532.0L1042.8 530.6L1034.8 529.2L1026.2 527.7L1017.4 526.0L1008.6 524.1L1000.0 522.0L991.7 519.5L983.3 516.8L975.0 513.8L966.7 510.8L958.3 507.8L950.0 505.0L941.7 502.5L933.3 500.1L925.0 497.9L916.7 495.5L908.3 492.9L900.0 490.0L891.4 486.6L882.6 482.7L873.8 478.6L865.2 474.5L857.2 470.6L850.0 467.0L844.0 464.0L839.1 461.4L834.7 458.9L830.4 456.4L825.6 453.5L820.0 450.0L813.3 445.7L805.8 440.7L797.9 435.4L790.0 430.0L782.2 424.7L775.0 420.0L767.9 415.5L760.7 411.0L753.7 406.6L747.3 402.7L741.9 399.4L738.0 397.0z" fill="#dadada" /><path d="M739.0 364.0L743.2 365.3L749.0 366.9L755.9 368.8L763.4 371.1L771.3 373.9L779.0 377.0L787.0 380.8L795.9 385.4L804.9 390.4L813.8 395.4L822.0 400.0L829.0 404.0L834.3 407.1L838.3 409.7L841.5 411.9L844.7 414.1L848.7 416.3L854.0 419.0L860.9 422.0L868.8 425.3L877.4 428.7L886.4 432.1L895.4 435.6L904.0 439.0L912.3 442.3L920.7 445.7L929.0 449.0L937.3 452.3L945.7 455.7L954.0 459.0L962.3 462.4L970.7 465.9L979.0 469.4L987.3 472.9L995.7 476.1L1004.0 479.0L1012.6 481.5L1021.6 483.6L1030.6 485.5L1039.2 487.4L1047.1 489.5L1054.0 492.0L1059.7 495.0L1064.5 498.5L1068.6 502.1L1072.2 505.7L1075.6 509.1L1079.0 512.0L1082.5 514.5L1085.9 516.7L1089.1 518.8L1091.9 520.5L1094.2 521.9L1096.0 523.0L1092.0 538.0L1090.9 538.1L1089.6 538.2L1087.9 538.4L1085.8 538.4L1083.2 538.3L1080.0 538.0L1076.3 537.4L1072.1 536.6L1067.4 535.6L1062.1 534.5L1056.4 533.3L1050.0 532.0L1042.8 530.6L1034.8 529.2L1026.2 527.7L1017.4 526.0L1008.6 524.1L1000.0 522.0L991.7 519.5L983.3 516.8L975.0 513.8L966.7 510.8L958.3 507.8L950.0 505.0L941.7 502.5L933.3 500.1L925.0 497.9L916.7 495.5L908.3 492.9L900.0 490.0L891.4 486.6L882.6 482.7L873.8 478.6L865.2 474.5L857.2 470.6L850.0 467.0L844.0 464.0L839.1 461.4L834.7 458.9L830.4 456.4L825.6 453.5L820.0 450.0L813.3 445.7L805.8 440.7L797.9 435.4L790.0 430.0L782.2 424.7L775.0 420.0L767.9 415.5L760.7 411.0L753.7 406.6L747.3 402.7L741.9 399.4L738.0 397.0z" fill="#d2d2d2" /><path d="M735.0 377.0L739.2 378.3L745.0 379.9L751.9 381.8L759.4 384.1L767.3 386.9L775.0 390.0L783.0 393.8L791.9 398.4L800.9 403.4L809.8 408.4L818.0 413.0L825.0 417.0L830.3 420.1L834.3 422.7L837.5 424.9L840.7 427.1L844.7 429.3L850.0 432.0L856.9 435.0L864.8 438.3L873.4 441.7L882.4 445.1L891.4 448.6L900.0 452.0L908.3 455.3L916.7 458.7L925.0 462.0L933.3 465.3L941.7 468.7L950.0 472.0L958.3 475.4L966.7 478.9L975.0 482.4L983.3 485.9L991.7 489.1L1000.0 492.0L1008.6 494.5L1017.6 496.6L1026.6 498.5L1035.2 500.4L1043.1 502.5L1050.0 505.0L1055.7 508.0L1060.5 511.5L1064.6 515.1L1068.2 518.7L1071.6 522.1L1075.0 525.0L1078.5 527.5L1081.9 529.7L1085.1 531.8L1087.9 533.5L1090.2 534.9L1092.0 536.0L1092.0 538.0L1090.9 538.1L1089.6 538.2L1087.9 538.4L1085.8 538.4L1083.2 538.3L1080.0 538.0L1076.3 537.4L1072.1 536.6L1067.4 535.6L1062.1 534.5L1056.4 533.3L1050.0 532.0L1042.8 530.6L1034.8 529.2L1026.2 527.7L1017.4 526.0L1008.6 524.1L1000.0 522.0L991.7 519.5L983.3 516.8L975.0 513.8L966.7 510.8L958.3 507.8L950.0 505.0L941.7 502.5L933.3 500.1L925.0 497.9L916.7 495.5L908.3 492.9L900.0 490.0L891.4 486.6L882.6 482.7L873.8 478.6L865.2 474.5L857.2 470.6L850.0 467.0L844.0 464.0L839.1 461.4L834.7 458.9L830.4 456.4L825.6 453.5L820.0 450.0L813.3 445.7L805.8 440.7L797.9 435.4L790.0 430.0L782.2 424.7L775.0 420.0L767.9 415.5L760.7 411.0L753.7 406.6L747.3 402.7L741.9 399.4L738.0 397.0z" fill="#555" stroke="#aaa" stroke-width="3.0" stroke-linejoin="round" paint-order="stroke"/><path d="M870.5 529.3L871.9 531.9L874.0 535.3L876.6 539.2L879.6 543.4L882.6 547.8L885.6 552.0L889.7 555.7L894.3 559.9L899.0 564.1L903.4 568.1L907.3 571.4L910.2 573.7L913.8 570.3L911.8 567.3L908.8 563.1L905.3 558.4L901.4 553.3L897.7 548.4L894.4 544.0L890.5 540.6L886.5 537.2L882.6 533.8L879.0 530.8L875.9 528.3L873.5 526.7z" fill="#c9c9c9" /><path d="M1033.1 571.2L1034.5 573.0L1036.6 575.3L1039.2 577.9L1041.9 580.6L1044.6 583.4L1046.9 585.9L1049.8 587.5L1052.8 589.4L1055.9 591.2L1058.7 592.9L1061.1 594.3L1063.0 595.1L1065.0 592.9L1063.9 591.1L1062.2 588.9L1060.1 586.3L1057.8 583.5L1055.4 580.7L1053.1 578.1L1050.0 576.4L1046.5 574.5L1043.1 572.6L1039.8 571.0L1037.0 569.6L1034.9 568.8z" fill="#c9c9c9" /><path d="M772.6 580.5L773.0 583.3L773.9 587.1L774.9 591.7L776.0 596.6L777.2 601.5L778.2 606.2L780.0 610.7L781.9 615.8L783.9 620.8L785.7 625.6L787.3 629.6L788.6 632.4L791.4 631.6L791.0 628.5L790.2 624.3L789.1 619.3L788.0 614.0L786.9 608.7L785.8 603.8L784.0 599.4L782.1 594.6L780.1 590.0L778.3 585.7L776.7 582.1L775.4 579.5z" fill="#c9c9c9" /><path d="M666.5 599.7L665.6 602.1L664.5 605.4L663.3 609.3L662.0 613.5L660.8 617.6L659.6 621.1L659.4 624.6L659.1 628.2L658.8 631.7L658.6 634.9L658.5 637.6L658.5 639.7L661.5 640.3L662.4 638.5L663.5 636.0L664.7 633.0L665.9 629.7L667.2 626.3L668.4 622.9L668.6 619.1L668.9 614.8L669.2 610.4L669.4 606.3L669.5 602.8L669.5 600.3z" fill="#c9c9c9" /><path d="M788.7 470.8L789.4 472.7L790.5 475.4L791.9 478.5L793.5 481.9L795.1 485.3L796.8 488.4L799.2 490.9L801.9 493.4L804.6 495.8L807.1 498.0L809.2 499.8L810.9 501.0L813.1 499.0L812.1 497.2L810.5 494.9L808.7 492.2L806.7 489.3L804.8 486.4L803.2 483.6L801.1 481.3L798.8 478.5L796.6 475.7L794.5 473.0L792.7 470.8L791.3 469.2z" fill="#c9c9c9" /><path d="M724.1 497.5L726.4 503.2L729.9 511.1L734.0 520.3L738.4 530.2L742.7 539.9L746.4 548.7L750.0 556.4L753.4 563.8L756.6 571.1L759.8 578.3L762.8 585.8L765.8 593.6L769.5 602.2L773.4 612.0L777.2 622.1L780.8 631.5L783.9 639.5L786.3 645.2L787.7 644.8L786.5 638.7L784.6 630.4L782.3 620.5L779.6 610.0L776.9 599.7L774.2 590.4L771.0 582.4L767.7 574.9L764.4 567.6L760.9 560.3L757.3 552.9L753.6 545.3L749.0 536.8L743.8 527.5L738.5 518.1L733.5 509.2L729.1 501.8L725.9 496.5z" fill="#dcdcdc" stroke="#dcdcdc" stroke-width="11.0" stroke-linejoin="round" paint-order="stroke"/><path d="M746.4 435.5L749.3 439.5L753.4 445.1L758.2 451.7L763.5 458.8L768.8 466.1L773.8 472.9L778.4 479.4L783.0 485.8L787.6 492.2L792.3 498.9L797.1 506.1L802.1 513.9L807.4 522.9L813.0 533.1L818.8 543.9L824.6 554.5L830.2 564.5L835.5 573.2L841.2 579.7L846.5 584.5L851.4 588.3L855.9 591.9L860.1 596.0L864.4 601.5L869.0 609.5L873.8 619.4L878.6 630.0L882.9 640.3L886.7 649.1L889.5 655.2L890.5 654.8L888.4 648.4L885.4 639.3L881.8 628.7L877.8 617.7L873.7 607.2L869.6 598.5L865.5 591.8L861.3 586.5L857.1 582.0L853.0 577.8L848.8 573.0L844.5 566.8L838.9 559.0L832.9 549.6L826.6 539.4L820.2 528.9L813.9 519.0L807.9 510.1L802.3 502.4L796.8 495.5L791.5 489.2L786.4 483.1L781.3 477.2L776.2 471.1L771.0 464.4L765.5 457.3L760.0 450.3L755.0 443.9L750.7 438.5L747.6 434.5z" fill="#dcdcdc" stroke="#dcdcdc" stroke-width="11.0" stroke-linejoin="round" paint-order="stroke"/><path d="M791.5 462.5L794.9 466.2L799.6 471.1L805.2 476.9L811.4 483.2L817.6 489.8L823.5 496.4L829.1 503.2L834.8 510.5L840.7 518.1L846.7 525.7L852.7 533.2L858.8 540.2L865.1 546.3L871.3 552.0L877.6 557.4L883.9 562.7L890.4 568.0L897.2 573.5L905.2 579.2L914.2 585.4L923.3 591.6L931.9 597.4L939.2 602.3L944.5 605.6L945.5 604.4L940.9 600.1L934.3 594.3L926.5 587.5L918.1 580.3L910.0 573.1L902.8 566.5L896.1 561.0L889.6 555.7L883.4 550.5L877.3 545.2L871.3 539.7L865.2 533.8L858.7 527.7L852.2 520.9L845.7 513.9L839.2 506.8L832.7 500.0L826.5 493.6L820.2 487.3L813.6 481.0L807.2 474.9L801.2 469.4L796.2 464.8L792.5 461.5z" fill="#dcdcdc" stroke="#dcdcdc" stroke-width="11.0" stroke-linejoin="round" paint-order="stroke"/><path d="M964.5 532.6L969.6 537.1L976.7 543.3L985.1 550.5L994.1 558.2L1002.8 565.5L1010.5 572.0L1016.8 577.7L1022.6 582.9L1028.3 588.0L1034.0 592.9L1040.0 597.9L1046.7 603.0L1054.4 608.1L1062.6 613.3L1071.1 618.4L1079.7 623.5L1088.1 628.6L1096.3 633.5L1105.3 637.6L1114.8 642.1L1124.3 646.4L1133.0 650.4L1140.5 653.6L1146.0 655.7L1148.0 652.3L1143.4 648.6L1136.8 643.7L1129.0 638.2L1120.5 632.2L1111.8 626.2L1103.7 620.5L1095.3 616.0L1086.5 611.3L1077.8 606.7L1069.2 602.0L1060.9 597.5L1053.3 593.0L1046.1 588.9L1039.6 585.0L1033.4 581.2L1027.1 577.1L1020.6 572.8L1013.5 568.0L1005.5 562.1L996.5 555.2L987.2 548.0L978.4 541.2L970.9 535.4L965.5 531.4z" fill="#dcdcdc" stroke="#dcdcdc" stroke-width="11.0" stroke-linejoin="round" paint-order="stroke"/><path d="M724.1 497.5L726.4 503.2L729.9 511.1L734.0 520.3L738.4 530.2L742.7 539.9L746.4 548.7L750.0 556.4L753.4 563.8L756.6 571.1L759.8 578.3L762.8 585.8L765.8 593.6L769.5 602.2L773.4 612.0L777.2 622.1L780.8 631.5L783.9 639.5L786.3 645.2L787.7 644.8L786.5 638.7L784.6 630.4L782.3 620.5L779.6 610.0L776.9 599.7L774.2 590.4L771.0 582.4L767.7 574.9L764.4 567.6L760.9 560.3L757.3 552.9L753.6 545.3L749.0 536.8L743.8 527.5L738.5 518.1L733.5 509.2L729.1 501.8L725.9 496.5z" fill="#555" stroke="#aaa" stroke-width="5.0" stroke-linejoin="round" paint-order="stroke"/><path d="M746.4 435.5L749.3 439.5L753.4 445.1L758.2 451.7L763.5 458.8L768.8 466.1L773.8 472.9L778.4 479.4L783.0 485.8L787.6 492.2L792.3 498.9L797.1 506.1L802.1 513.9L807.4 522.9L813.0 533.1L818.8 543.9L824.6 554.5L830.2 564.5L835.5 573.2L841.2 579.7L846.5 584.5L851.4 588.3L855.9 591.9L860.1 596.0L864.4 601.5L869.0 609.5L873.8 619.4L878.6 630.0L882.9 640.3L886.7 649.1L889.5 655.2L890.5 654.8L888.4 648.4L885.4 639.3L881.8 628.7L877.8 617.7L873.7 607.2L869.6 598.5L865.5 591.8L861.3 586.5L857.1 582.0L853.0 577.8L848.8 573.0L844.5 566.8L838.9 559.0L832.9 549.6L826.6 539.4L820.2 528.9L813.9 519.0L807.9 510.1L802.3 502.4L796.8 495.5L791.5 489.2L786.4 483.1L781.3 477.2L776.2 471.1L771.0 464.4L765.5 457.3L760.0 450.3L755.0 443.9L750.7 438.5L747.6 434.5z" fill="#555" stroke="#aaa" stroke-width="5.0" stroke-linejoin="round" paint-order="stroke"/><path d="M791.5 462.5L794.9 466.2L799.6 471.1L805.2 476.9L811.4 483.2L817.6 489.8L823.5 496.4L829.1 503.2L834.8 510.5L840.7 518.1L846.7 525.7L852.7 533.2L858.8 540.2L865.1 546.3L871.3 552.0L877.6 557.4L883.9 562.7L890.4 568.0L897.2 573.5L905.2 579.2L914.2 585.4L923.3 591.6L931.9 597.4L939.2 602.3L944.5 605.6L945.5 604.4L940.9 600.1L934.3 594.3L926.5 587.5L918.1 580.3L910.0 573.1L902.8 566.5L896.1 561.0L889.6 555.7L883.4 550.5L877.3 545.2L871.3 539.7L865.2 533.8L858.7 527.7L852.2 520.9L845.7 513.9L839.2 506.8L832.7 500.0L826.5 493.6L820.2 487.3L813.6 481.0L807.2 474.9L801.2 469.4L796.2 464.8L792.5 461.5z" fill="#555" stroke="#aaa" stroke-width="5.0" stroke-linejoin="round" paint-order="stroke"/><path d="M964.5 532.6L969.6 537.1L976.7 543.3L985.1 550.5L994.1 558.2L1002.8 565.5L1010.5 572.0L1016.8 577.7L1022.6 582.9L1028.3 588.0L1034.0 592.9L1040.0 597.9L1046.7 603.0L1054.4 608.1L1062.6 613.3L1071.1 618.4L1079.7 623.5L1088.1 628.6L1096.3 633.5L1105.3 637.6L1114.8 642.1L1124.3 646.4L1133.0 650.4L1140.5 653.6L1146.0 655.7L1148.0 652.3L1143.4 648.6L1136.8 643.7L1129.0 638.2L1120.5 632.2L1111.8 626.2L1103.7 620.5L1095.3 616.0L1086.5 611.3L1077.8 606.7L1069.2 602.0L1060.9 597.5L1053.3 593.0L1046.1 588.9L1039.6 585.0L1033.4 581.2L1027.1 577.1L1020.6 572.8L1013.5 568.0L1005.5 562.1L996.5 555.2L987.2 548.0L978.4 541.2L970.9 535.4L965.5 531.4z" fill="#555" stroke="#aaa" stroke-width="5.0" stroke-linejoin="round" paint-order="stroke"/><path d="M870.0 502.0L874.6 505.8L881.0 511.1L888.6 517.4L896.7 524.2L904.7 530.9L912.0 537.0L918.5 542.6L924.7 548.2L930.8 553.7L937.0 559.1L943.3 564.6L950.0 570.0L957.4 575.6L965.6 581.6L973.9 587.4L982.0 593.0L989.2 598.0L995.0 602.0L999.4 605.1L1002.8 607.3L1005.3 609.0L1007.2 610.2L1008.7 611.2L1010.0 612.0" fill="none" stroke="#dcdcdc" stroke-width="11.0" stroke-linecap="round"/><path d="M870.0 502.0L874.6 505.8L881.0 511.1L888.6 517.4L896.7 524.2L904.7 530.9L912.0 537.0L918.5 542.6L924.7 548.2L930.8 553.7L937.0 559.1L943.3 564.6L950.0 570.0L957.4 575.6L965.6 581.6L973.9 587.4L982.0 593.0L989.2 598.0L995.0 602.0L999.4 605.1L1002.8 607.3L1005.3 609.0L1007.2 610.2L1008.7 611.2L1010.0 612.0" fill="none" stroke="#aaa" stroke-width="5.0" stroke-linecap="round"/><path d="M870.0 502.0L874.6 505.8L881.0 511.1L888.6 517.4L896.7 524.2L904.7 530.9L912.0 537.0L918.5 542.6L924.7 548.2L930.8 553.7L937.0 559.1L943.3 564.6L950.0 570.0L957.4 575.6L965.6 581.6L973.9 587.4L982.0 593.0L989.2 598.0L995.0 602.0L999.4 605.1L1002.8 607.3L1005.3 609.0L1007.2 610.2L1008.7 611.2L1010.0 612.0" fill="none" stroke="#555" stroke-width="2.0" stroke-linecap="round" stroke-dasharray="6 3"/><path d="M1022.0 545.0L1027.8 548.0L1035.9 552.1L1045.4 556.9L1055.6 562.1L1065.7 567.3L1075.0 572.0L1083.4 576.2L1091.6 580.2L1099.8 584.1L1107.9 588.1L1116.3 592.4L1125.0 597.0L1134.8 602.4L1145.6 608.6L1156.6 615.1L1167.0 621.1L1175.7 626.3L1182.0 630.0" fill="none" stroke="#dcdcdc" stroke-width="11.0" stroke-linecap="round"/><path d="M1022.0 545.0L1027.8 548.0L1035.9 552.1L1045.4 556.9L1055.6 562.1L1065.7 567.3L1075.0 572.0L1083.4 576.2L1091.6 580.2L1099.8 584.1L1107.9 588.1L1116.3 592.4L1125.0 597.0L1134.8 602.4L1145.6 608.6L1156.6 615.1L1167.0 621.1L1175.7 626.3L1182.0 630.0" fill="none" stroke="#aaa" stroke-width="5.0" stroke-linecap="round"/><path d="M1022.0 545.0L1027.8 548.0L1035.9 552.1L1045.4 556.9L1055.6 562.1L1065.7 567.3L1075.0 572.0L1083.4 576.2L1091.6 580.2L1099.8 584.1L1107.9 588.1L1116.3 592.4L1125.0 597.0L1134.8 602.4L1145.6 608.6L1156.6 615.1L1167.0 621.1L1175.7 626.3L1182.0 630.0" fill="none" stroke="#555" stroke-width="2.0" stroke-linecap="round" stroke-dasharray="6 3"/><path d="M1100.0 522.0L1102.7 525.0L1106.5 529.2L1110.9 534.1L1115.7 539.5L1120.5 544.9L1125.0 550.0L1129.2 554.9L1133.5 559.9L1137.8 564.9L1142.0 569.9L1146.1 575.0L1150.0 580.0L1153.9 585.3L1157.8 591.1L1161.6 596.9L1165.0 602.2L1167.9 606.7L1170.0 610.0" fill="none" stroke="#dcdcdc" stroke-width="11.0" stroke-linecap="round"/><path d="M1100.0 522.0L1102.7 525.0L1106.5 529.2L1110.9 534.1L1115.7 539.5L1120.5 544.9L1125.0 550.0L1129.2 554.9L1133.5 559.9L1137.8 564.9L1142.0 569.9L1146.1 575.0L1150.0 580.0L1153.9 585.3L1157.8 591.1L1161.6 596.9L1165.0 602.2L1167.9 606.7L1170.0 610.0" fill="none" stroke="#aaa" stroke-width="5.0" stroke-linecap="round"/><path d="M1100.0 522.0L1102.7 525.0L1106.5 529.2L1110.9 534.1L1115.7 539.5L1120.5 544.9L1125.0 550.0L1129.2 554.9L1133.5 559.9L1137.8 564.9L1142.0 569.9L1146.1 575.0L1150.0 580.0L1153.9 585.3L1157.8 591.1L1161.6 596.9L1165.0 602.2L1167.9 606.7L1170.0 610.0" fill="none" stroke="#555" stroke-width="2.0" stroke-linecap="round" stroke-dasharray="6 3"/><path d="M715.0 257.0L709.6 258.4L702.0 260.2L693.1 262.4L683.8 264.8L675.1 267.4L668.0 270.0L662.6 272.7L658.0 275.7L654.1 278.8L650.5 282.0L646.9 285.1L643.0 288.0L638.8 290.7L634.7 293.3L630.5 295.9L626.3 298.4L622.2 301.1L618.0 304.0L613.8 307.0L609.7 310.1L605.5 313.2L601.3 316.6L597.2 320.2L593.0 324.0L588.8 328.2L584.7 332.6L580.5 337.2L576.3 342.1L572.2 347.0L568.0 352.0L563.8 357.1L559.7 362.5L555.5 368.0L551.3 373.5L547.2 378.9L543.0 384.0L538.8 389.0L534.5 393.9L530.2 398.8L526.0 403.4L521.9 407.8L518.0 412.0L514.4 415.6L511.1 418.7L507.9 421.6L504.7 424.5L501.4 427.9L498.0 432.0L494.3 436.9L490.6 442.3L486.7 448.1L482.8 454.2L478.9 460.5L475.0 467.0L471.1 473.7L467.2 480.9L463.3 488.2L459.4 495.6L455.7 502.9L452.0 510.0L448.5 516.8L445.0 523.4L441.6 529.9L438.3 536.4L435.1 543.1L432.0 550.0L428.8 557.7L425.5 566.3L422.2 575.0L419.3 583.1L416.8 590.0L415.0 595.0" fill="none" stroke="#555" stroke-width="3.0" stroke-linecap="round" stroke-dasharray="10 3"/><path d="M690.0 262.0L687.6 262.8L684.4 263.7L680.6 264.9L676.4 266.3L672.1 268.0L668.0 270.0L664.0 272.4L659.9 275.3L655.7 278.5L651.4 281.8L647.2 285.0L643.0 288.0L638.8 290.7L634.7 293.3L630.5 295.9L626.3 298.4L622.2 301.1L618.0 304.0L613.8 307.0L609.7 310.1L605.5 313.2L601.3 316.6L597.2 320.2L593.0 324.0L588.8 328.2L584.7 332.6L580.5 337.2L576.3 342.1L572.2 347.0L568.0 352.0L563.8 357.1L559.7 362.5L555.5 368.0L551.3 373.5L547.2 378.9L543.0 384.0L538.8 389.0L534.5 393.9L530.2 398.8L526.0 403.4L521.9 407.8L518.0 412.0L514.4 415.6L511.1 418.7L507.9 421.6L504.7 424.5L501.4 427.9L498.0 432.0L494.3 436.9L490.6 442.3L486.7 448.1L482.8 454.2L478.9 460.5L475.0 467.0L471.1 473.7L467.2 480.9L463.3 488.2L459.4 495.6L455.7 502.9L452.0 510.0L448.5 516.8L445.0 523.4L441.6 529.9L438.3 536.4L435.1 543.1L432.0 550.0L428.8 557.7L425.5 566.3L422.2 575.0L419.3 583.1L416.8 590.0L415.0 595.0" fill="none" stroke="#0c0c0c" stroke-width="1.5" stroke-linecap="round" stroke-dasharray="3 9"/><path d="M648.0 296.0L646.0 298.0L643.3 300.7L640.1 303.9L636.7 307.3L633.2 310.8L630.0 314.0L626.8 317.2L623.3 320.7L619.9 324.1L616.7 327.3L614.0 330.0L612.0 332.0" fill="none" stroke="#555" stroke-width="4.0" stroke-linecap="round"/><path d="M735.0 262.0L732.5 263.8L729.0 266.2L724.9 269.1L720.4 272.2L716.0 275.3L712.0 278.0L708.3 280.4L704.6 282.8L700.9 285.1L697.3 287.4L693.7 289.7L690.0 292.0L686.3 294.3L682.7 296.6L679.1 298.9L675.4 301.2L671.7 303.6L668.0 306.0L664.3 308.6L660.6 311.3L656.8 314.0L653.0 316.7L649.1 319.4L645.0 322.0L640.7 324.5L636.0 327.1L631.3 329.6L626.6 332.0L622.1 334.2L618.0 336.0L614.3 337.2L611.0 337.9L607.9 338.3L604.8 338.9L601.5 340.0L598.0 342.0L594.0 345.1L589.8 349.0L585.4 353.4L581.0 358.1L576.8 362.7L573.0 367.0L569.4 371.2L565.8 375.7L562.4 380.1L559.4 384.1L556.9 387.5L555.0 390.0L585.0 397.0L586.4 397.1L588.1 397.2L590.2 397.4L592.8 397.6L596.1 397.8L600.0 398.0L605.1 398.5L611.4 399.3L618.3 400.1L625.3 400.7L631.7 400.8L637.0 400.0L641.3 398.3L645.0 395.7L648.1 392.6L650.8 389.3L653.1 386.0L655.0 383.0L656.4 380.3L657.1 377.6L657.4 375.0L657.5 372.4L657.6 369.7L658.0 367.0L658.6 364.2L659.3 361.4L660.0 358.6L660.7 355.7L661.4 352.8L662.0 350.0L662.3 347.2L662.3 344.3L662.2 341.4L662.4 338.6L663.2 335.8L665.0 333.0L667.8 330.3L671.5 327.6L675.8 325.0L680.5 322.4L685.3 319.7L690.0 317.0L694.8 314.1L700.0 311.1L705.3 308.1L710.6 305.2L715.5 302.4L720.0 300.0L724.1 297.8L728.1 295.8L731.9 293.9L735.2 292.3L737.9 291.0L740.0 290.0z" fill="#555" /><path d="M573.0 367.0L570.1 370.6L566.1 375.7L561.4 381.6L556.4 388.0L551.5 394.3L547.0 400.0L543.0 405.2L539.3 410.1L535.6 415.1L531.9 420.0L528.0 424.9L524.0 430.0L519.7 435.3L515.1 440.7L510.4 446.1L505.8 451.6L501.3 456.9L497.0 462.0L493.1 466.7L489.5 471.1L486.1 475.3L482.6 479.7L479.0 484.5L475.0 490.0L470.6 496.3L465.9 503.1L461.0 510.4L456.1 518.0L451.4 525.5L447.0 533.0L442.8 540.6L438.7 548.5L434.8 556.4L431.1 564.2L427.8 571.5L425.0 578.0L422.8 584.0L421.0 589.6L419.6 594.8L418.6 599.4L417.7 603.2L417.0 606.0L460.0 609.0L460.9 606.1L462.1 602.3L463.6 597.6L465.4 592.3L467.5 586.4L470.0 580.0L472.9 572.9L476.3 564.9L480.1 556.3L484.0 547.4L488.0 538.6L492.0 530.0L496.1 521.3L500.6 512.1L505.1 503.0L509.4 494.3L513.5 486.5L517.0 480.0L519.7 475.3L521.7 472.1L523.4 469.8L525.1 467.7L527.2 465.3L530.0 462.0L533.5 457.7L537.6 453.0L542.0 447.9L546.6 442.6L551.3 437.3L556.0 432.0L560.8 426.5L566.0 420.7L571.2 414.8L576.3 409.1L580.9 404.1L585.0 400.0L588.5 396.9L591.6 394.7L594.3 393.0L596.6 391.8L598.5 390.8L600.0 390.0z" fill="#555" /><path d="M640.0 385.0L636.6 387.8L631.9 391.7L626.3 396.2L620.4 401.1L614.8 405.8L610.0 410.0L606.0 413.6L602.3 416.9L598.8 420.0L595.5 423.1L592.3 426.4L589.0 430.0L585.7 433.9L582.6 438.0L579.4 442.2L576.3 446.5L573.2 450.8L570.0 455.0L566.8 458.9L563.6 462.4L560.4 465.9L557.1 469.8L553.6 474.4L550.0 480.0L546.1 486.9L542.0 494.8L537.8 503.4L533.5 512.4L529.2 521.4L525.0 530.0L520.8 538.3L516.4 546.7L512.1 555.0L507.8 563.3L503.8 571.7L500.0 580.0L496.6 588.3L493.4 596.7L490.4 605.0L487.6 613.3L484.8 621.7L482.0 630.0L479.2 638.5L476.4 647.3L473.8 656.1L471.1 664.7L468.5 672.7L466.0 680.0L463.5 686.5L460.9 692.3L458.4 697.7L456.0 702.7L453.8 707.4L452.0 712.0L450.5 716.6L449.2 721.2L448.1 725.5L447.3 729.4L446.6 732.6L446.0 735.0L450.0 737.0L451.2 734.9L452.7 732.1L454.6 728.8L456.8 724.9L459.3 720.6L462.0 716.0L465.1 711.0L468.7 705.6L472.6 699.8L476.5 693.6L480.4 687.0L484.0 680.0L487.2 672.5L490.2 664.4L493.1 655.9L496.0 647.2L499.3 638.5L503.0 630.0L507.3 621.7L512.1 613.3L517.1 605.0L522.3 596.7L527.3 588.3L532.0 580.0L536.2 571.7L540.1 563.3L543.9 555.0L547.9 546.7L552.1 538.3L557.0 530.0L562.8 521.4L569.6 512.4L576.6 503.4L583.6 494.8L589.8 486.9L595.0 480.0L598.8 474.4L601.7 469.8L603.9 465.9L605.9 462.4L607.8 458.9L610.0 455.0L612.5 450.9L615.1 446.8L617.7 442.7L620.2 438.6L622.7 434.3L625.0 430.0L627.1 425.4L628.9 420.5L630.6 415.5L632.4 410.6L634.5 406.1L637.0 402.0L640.2 398.3L644.1 394.9L648.2 391.8L652.2 389.0L655.6 386.7L658.0 385.0z" fill="#555" /><path d="M742.0 372.0L739.8 375.0L736.9 379.2L733.4 384.1L729.6 389.5L725.7 394.9L722.0 400.0L718.5 404.9L715.0 410.0L711.5 415.2L707.9 420.3L704.0 425.3L700.0 430.0L695.5 434.5L690.5 438.7L685.4 442.8L680.4 446.9L675.8 450.9L672.0 455.0L669.2 458.9L667.3 462.4L665.8 465.9L664.4 469.8L662.6 474.4L660.0 480.0L656.6 486.9L652.6 494.8L648.2 503.4L643.7 512.4L639.2 521.4L635.0 530.0L631.0 538.3L626.9 546.7L622.9 555.0L619.0 563.3L615.3 571.7L612.0 580.0L609.0 588.6L606.3 597.5L603.8 606.4L601.5 615.0L599.2 623.0L597.0 630.0L594.7 636.1L592.3 641.7L590.1 646.6L588.0 650.9L586.3 654.3L585.0 657.0L595.0 657.0L596.6 654.3L598.6 650.9L601.1 646.6L603.9 641.7L606.9 636.1L610.0 630.0L613.2 623.0L616.6 615.0L620.2 606.4L624.0 597.5L627.9 588.6L632.0 580.0L636.4 571.7L641.0 563.3L645.8 555.0L650.7 546.7L655.4 538.3L660.0 530.0L664.5 521.4L668.9 512.4L673.3 503.4L677.5 494.8L681.4 486.9L685.0 480.0L688.1 474.4L690.8 469.7L693.2 465.8L695.4 462.3L697.7 458.8L700.0 455.0L702.3 451.2L704.4 447.5L706.5 443.9L708.7 440.3L711.2 436.3L714.0 432.0L717.5 427.0L721.4 421.4L725.7 415.5L729.9 409.7L733.8 404.5L737.0 400.0L739.7 396.3L742.0 393.2L743.9 390.5L745.6 388.3L746.9 386.4L748.0 385.0z" fill="#555" /><path d="M721.0 439.8L719.4 444.4L717.4 450.8L715.2 458.3L712.7 466.7L710.2 475.4L707.6 484.0L705.2 492.8L702.6 502.2L699.9 512.0L697.2 521.8L694.4 531.4L691.7 540.3L689.5 549.1L687.2 557.7L684.9 566.1L682.6 574.0L680.4 581.4L678.3 588.0L676.9 594.3L675.3 600.1L673.7 605.5L672.3 610.2L671.2 614.2L670.6 617.4L673.4 618.6L675.3 616.1L677.8 612.8L680.5 608.5L683.5 603.6L686.6 598.0L689.7 592.0L692.0 585.1L694.4 577.6L696.9 569.5L699.4 561.1L701.8 552.4L704.3 543.7L706.4 534.4L708.5 524.6L710.6 514.6L712.7 504.6L714.6 495.0L716.4 486.0L717.8 477.2L719.3 468.2L720.6 459.5L721.7 451.7L722.5 445.1L723.0 440.2z" fill="#555" stroke="#aaa" stroke-width="5.0" stroke-linejoin="round" paint-order="stroke"/><path d="M449.1 614.3L447.5 618.4L445.4 624.2L443.1 631.0L440.7 638.5L438.2 646.1L435.7 653.4L433.9 660.5L432.0 667.8L430.1 675.2L428.1 682.8L426.1 690.6L424.2 698.5L422.6 707.3L420.9 717.0L419.1 726.8L417.5 736.0L416.3 743.8L415.6 749.4L420.4 750.6L422.3 745.2L424.7 737.7L427.4 728.8L430.3 719.3L433.1 709.9L435.8 701.5L437.9 693.7L440.0 686.0L442.2 678.5L444.3 671.1L446.3 663.8L448.3 656.6L449.6 649.0L451.0 641.1L452.4 633.3L453.5 626.2L454.4 620.2L454.9 615.7z" fill="#555" /><path d="M400.1 635.3L398.2 639.9L395.6 646.4L392.5 654.0L389.2 662.4L386.0 670.9L383.1 679.1L380.7 687.1L378.3 695.4L376.0 703.8L373.8 712.3L371.7 720.8L369.6 729.2L367.5 737.5L365.4 745.8L363.4 754.2L361.5 762.5L359.7 770.9L358.1 779.3L356.7 787.8L355.6 796.2L354.6 804.5L353.7 812.9L352.8 821.3L352.0 829.6L351.1 837.9L350.2 846.3L349.4 854.6L348.6 863.0L348.0 871.4L347.5 879.8L347.2 888.4L347.0 897.3L346.9 906.2L346.9 914.9L347.1 923.0L347.5 930.3L348.1 936.7L348.9 942.3L349.8 947.3L350.9 951.9L352.0 956.5L353.2 961.3L354.3 966.2L355.6 971.0L356.9 975.8L358.4 980.7L360.0 986.0L361.8 991.8L364.0 998.7L366.6 1006.6L369.4 1014.9L372.1 1022.8L374.3 1029.5L375.9 1034.2L388.1 1029.8L386.3 1025.1L383.7 1018.6L380.7 1010.8L377.6 1002.7L374.7 994.9L372.2 988.2L370.3 982.6L368.5 977.5L367.0 972.7L365.5 968.1L364.2 963.5L362.8 958.7L361.5 954.0L360.2 949.5L359.1 945.2L358.0 940.7L357.2 935.6L356.5 929.7L356.1 922.6L355.9 914.8L355.9 906.3L356.0 897.5L356.2 888.7L356.5 880.2L356.8 871.9L357.3 863.6L357.9 855.4L358.5 847.1L359.2 838.7L360.0 830.4L360.8 822.1L361.6 813.7L362.5 805.5L363.5 797.2L364.6 788.9L365.9 780.7L367.4 772.4L369.0 764.1L370.7 755.8L372.6 747.5L374.5 739.2L376.4 730.8L378.3 722.4L380.3 713.9L382.3 705.4L384.4 697.0L386.6 688.8L388.9 680.9L391.4 672.7L394.2 664.2L397.2 655.8L399.9 648.0L402.2 641.5L403.9 636.7z" fill="#555" stroke="#aaa" stroke-width="3.0" stroke-linejoin="round" paint-order="stroke"/><path d="M404.4 1032.6L404.9 1030.7L405.4 1028.1L406.1 1025.1L406.9 1021.9L407.7 1018.6L408.4 1015.6L408.9 1012.6L409.5 1009.2L410.2 1005.9L410.8 1002.7L411.2 1000.1L411.5 998.1L410.5 997.9L409.6 999.6L408.6 1002.1L407.3 1005.0L406.0 1008.2L404.7 1011.4L403.6 1014.4L402.8 1017.4L402.0 1020.7L401.3 1024.0L400.6 1027.0L400.0 1029.6L399.6 1031.4z" fill="#555" stroke="#aaa" stroke-width="3.0" stroke-linejoin="round" paint-order="stroke"/><path d="M595.0 742.5L597.7 740.3L601.3 737.3L605.6 733.7L610.4 729.8L615.3 726.0L620.0 722.5L624.7 719.2L629.4 715.8L634.4 712.5L639.4 709.3L644.7 706.4L650.0 703.8L655.5 701.5L661.3 699.4L667.2 697.7L673.1 696.1L679.1 694.8L685.0 693.8L690.9 692.9L696.9 692.4L702.8 692.1L708.7 692.0L714.5 692.2L720.0 692.5L725.3 693.0L730.4 693.8L735.3 694.8L740.2 695.9L745.1 697.3L750.0 698.8L755.3 700.6L761.1 702.9L766.9 705.4L772.2 707.8L776.7 709.8L780.0 711.2" fill="none" stroke="#e2e2e2" stroke-width="9.0" stroke-linecap="round"/><path d="M587.5 760.0L589.5 757.9L592.3 755.0L595.6 751.5L599.1 748.1L602.5 745.0L605.8 742.4L609.2 739.9L612.7 737.6L616.3 735.1L620.0 732.5L623.8 729.6L627.6 726.6L631.5 723.4L635.6 720.4L640.0 717.5L644.8 714.7L649.9 711.9L655.1 709.2L660.2 706.9L665.0 705.0L669.2 703.6L673.1 702.7L676.9 702.1L680.8 701.6L685.0 701.2L689.7 701.0L694.8 701.0L699.9 701.2L705.1 701.3L710.0 701.2L714.7 701.0L719.4 700.5L724.0 700.1L728.4 699.9L732.5 700.0L736.3 700.5L739.7 701.4L743.1 702.4L746.4 703.7L750.0 705.0L753.8 706.5L757.8 708.2L761.9 710.0L766.0 711.9L770.0 713.8L774.2 715.7L778.5 717.8L782.7 719.9L786.6 721.9L790.0 723.8L792.9 725.3L795.4 726.5L797.6 727.7L799.1 729.2L800.0 731.2L800.0 734.0L799.3 737.3L798.1 740.9L796.6 744.3L795.0 747.5L793.4 750.2L791.6 752.5L789.6 754.8L787.4 757.2L785.0 760.0L782.3 763.2L779.2 766.8L776.1 770.4L772.9 774.1L770.0 777.5L767.4 780.7L765.1 783.9L762.7 787.0L760.3 789.9L757.5 792.5L754.4 794.9L751.0 797.2L747.4 799.2L743.7 801.0L740.0 802.5L736.2 803.7L732.2 804.6L728.1 805.2L724.0 805.8L720.0 806.2L716.0 806.7L712.0 807.2L708.0 807.5L704.0 807.6L700.0 807.5L696.0 807.1L692.0 806.6L688.0 805.9L684.0 804.9L680.0 803.8L676.0 802.3L672.0 800.7L668.0 798.8L664.0 796.9L660.0 795.0L656.0 793.1L652.0 791.1L648.0 789.1L644.0 787.0L640.0 785.0L635.9 783.0L631.8 780.9L627.6 778.8L623.7 776.8L620.0 775.0L616.6 773.2L613.5 771.5L610.6 769.9L607.8 768.6L605.0 767.5L602.2 766.9L599.5 766.8L596.8 766.8L594.5 766.7L592.5 766.2L590.9 765.2L589.7 763.8L588.8 762.3L588.1 760.9z" fill="#555" stroke="#aaa" stroke-width="5" paint-order="stroke"/><path d="M792.5 728.8L812.5 727.5" fill="none" stroke="#555" stroke-width="3.0" stroke-linecap="round"/><path d="M792.5 743.8L820.0 741.2" fill="none" stroke="#555" stroke-width="3.0" stroke-linecap="round"/><path d="M560.0 766.2L592.5 758.8" fill="none" stroke="#555" stroke-width="2.5" stroke-linecap="round"/><path d="M580.0 748.8L582.5 748.1L586.0 747.4L590.2 746.4L594.5 745.3L598.8 744.0L602.5 742.5L605.7 740.8L608.7 738.8L611.6 736.6L614.4 734.3L617.1 732.1L620.0 730.0L622.9 728.0L625.6 726.1L628.4 724.2L631.3 722.4L634.3 720.5L637.5 718.8L641.2 716.9L645.5 715.0L649.8 713.0L654.0 711.3L657.5 709.8L660.0 708.8" fill="none" stroke="#0c0c0c" stroke-width="2.0" stroke-linecap="round" stroke-dasharray="5 4"/><path d="M567.5 750.5L585.0 748.8" fill="none" stroke="#aaa" stroke-width="5.0" stroke-linecap="round"/><path d="M1090.0 715.0L1092.7 713.1L1096.3 710.5L1100.6 707.3L1105.4 704.1L1110.3 701.1L1115.0 698.8L1119.7 697.0L1124.6 695.5L1129.7 694.3L1134.8 693.2L1139.9 692.3L1145.0 691.2L1150.0 690.2L1155.0 689.1L1160.0 688.1L1165.0 687.3L1170.0 686.6L1175.0 686.2L1180.1 686.2L1185.2 686.3L1190.3 686.7L1195.4 687.2L1200.3 687.9L1205.0 688.8L1209.5 689.8L1213.7 691.1L1217.8 692.5L1221.9 694.0L1225.9 695.5L1230.0 697.0L1234.5 698.5L1239.3 700.1L1244.1 701.8L1248.5 703.3L1252.3 704.6L1255.0 705.5" fill="none" stroke="#e2e2e2" stroke-width="9.0" stroke-linecap="round"/><path d="M1082.5 740.0L1083.4 737.9L1084.6 734.9L1086.1 731.4L1087.9 728.0L1090.0 725.0L1092.5 722.5L1095.3 720.2L1098.5 718.0L1101.7 715.9L1105.0 713.8L1108.3 711.6L1111.6 709.4L1115.0 707.3L1118.6 705.4L1122.5 703.8L1126.6 702.4L1130.9 701.4L1135.4 700.5L1140.1 699.7L1145.0 698.8L1150.2 697.6L1155.8 696.4L1161.4 695.2L1167.1 694.3L1172.5 693.8L1177.7 693.7L1182.7 694.0L1187.6 694.5L1192.5 695.3L1197.5 696.2L1202.5 697.5L1207.6 699.0L1212.7 700.7L1217.7 702.3L1222.5 703.8L1227.3 704.9L1232.0 705.8L1236.7 706.7L1241.0 707.6L1245.0 708.8L1248.5 710.1L1251.7 711.5L1254.5 713.0L1257.3 714.6L1260.0 716.2L1262.8 717.9L1265.7 719.6L1268.3 721.4L1270.7 723.1L1272.5 725.0L1273.8 726.8L1274.6 728.7L1275.0 730.6L1275.1 732.7L1275.0 735.0L1274.6 737.7L1273.8 740.6L1272.7 743.8L1271.4 746.9L1270.0 750.0L1268.4 753.0L1266.6 756.1L1264.6 759.2L1262.4 762.2L1260.0 765.0L1257.4 767.7L1254.7 770.3L1251.8 772.8L1248.6 775.2L1245.0 777.5L1241.0 779.7L1236.7 781.9L1232.0 783.9L1227.3 785.8L1222.5 787.5L1217.7 789.0L1212.7 790.5L1207.6 791.7L1202.5 792.8L1197.5 793.8L1192.5 794.6L1187.5 795.3L1182.5 795.9L1177.5 796.2L1172.5 796.2L1167.5 796.0L1162.4 795.4L1157.3 794.6L1152.3 793.6L1147.5 792.5L1142.8 791.3L1138.1 789.9L1133.5 788.4L1129.1 786.7L1125.0 785.0L1121.2 783.2L1117.6 781.3L1114.3 779.3L1110.9 777.2L1107.5 775.0L1103.8 772.6L1100.0 770.1L1096.3 767.4L1092.9 764.9L1090.0 762.5L1087.7 760.4L1085.9 758.4L1084.5 756.6L1083.4 754.6L1082.5 752.5L1082.0 750.0L1082.0 747.1L1082.1 744.2L1082.4 741.7z" fill="#555" stroke="#aaa" stroke-width="5" paint-order="stroke"/><path d="M1258.8 715.0L1295.0 712.5" fill="none" stroke="#aaa" stroke-width="5.0" stroke-linecap="round"/><path d="M1258.8 715.0L1292.5 713.2" fill="none" stroke="#555" stroke-width="2.5" stroke-linecap="round"/><path d="M1036.2 743.8L1082.5 737.5" fill="none" stroke="#aaa" stroke-width="5.0" stroke-linecap="round"/><path d="M1037.5 743.2L1082.5 737.0" fill="none" stroke="#555" stroke-width="2.5" stroke-linecap="round"/><path d="M1032.5 770.0L1082.5 758.8" fill="none" stroke="#aaa" stroke-width="5.0" stroke-linecap="round"/><path d="M1033.8 769.5L1082.5 758.2" fill="none" stroke="#555" stroke-width="2.5" stroke-linecap="round"/><path d="M1100.0 720.0L1102.6 718.3L1106.2 715.8L1110.5 712.9L1114.9 710.0L1119.1 707.4L1122.5 705.5L1125.3 704.3L1127.9 703.5L1130.2 703.1L1132.1 702.9L1133.8 702.7L1135.0 702.5" fill="none" stroke="#0c0c0c" stroke-width="2.0" stroke-linecap="round" stroke-dasharray="4 3"/><circle cx="709.2" cy="704.5" r="2.200" fill="#0c0c0c"/><circle cx="709.2" cy="725.5" r="2.200" fill="#0c0c0c"/><circle cx="667.5" cy="741.8" r="2.200" fill="#0c0c0c"/><circle cx="625.0" cy="746.2" r="2.200" fill="#0c0c0c"/><circle cx="637.5" cy="752.5" r="2.200" fill="#0c0c0c"/><circle cx="607.0" cy="755.5" r="2.200" fill="#0c0c0c"/><circle cx="658.2" cy="767.5" r="2.200" fill="#0c0c0c"/><circle cx="718.2" cy="764.2" r="2.200" fill="#0c0c0c"/><circle cx="658.2" cy="793.8" r="2.200" fill="#0c0c0c"/><circle cx="1135.0" cy="716.2" r="2.200" fill="#0c0c0c"/><circle cx="1162.5" cy="716.2" r="2.200" fill="#0c0c0c"/><circle cx="1132.5" cy="725.5" r="2.200" fill="#0c0c0c"/><circle cx="1115.0" cy="734.5" r="2.200" fill="#0c0c0c"/><circle cx="1118.0" cy="743.0" r="2.200" fill="#0c0c0c"/><circle cx="1126.2" cy="752.5" r="2.200" fill="#0c0c0c"/><circle cx="1141.2" cy="749.2" r="2.200" fill="#0c0c0c"/><circle cx="1132.5" cy="761.8" r="2.200" fill="#0c0c0c"/><circle cx="1174.5" cy="755.2" r="2.200" fill="#0c0c0c"/><circle cx="1189.5" cy="764.2" r="2.200" fill="#0c0c0c"/><circle cx="1168.2" cy="770.2" r="2.200" fill="#0c0c0c"/><circle cx="1177.5" cy="776.5" r="2.200" fill="#0c0c0c"/><circle cx="1109.2" cy="722.0" r="2.200" fill="#0c0c0c"/><path d="M1172.5 816.2L1176.4 817.0L1181.8 818.0L1188.1 819.1L1195.2 820.5L1202.6 822.1L1210.0 823.8L1217.6 825.6L1225.7 827.7L1234.2 830.0L1242.9 832.4L1251.5 834.9L1260.0 837.5L1268.6 840.2L1277.4 843.1L1286.2 846.2L1294.8 849.2L1302.8 852.2L1310.0 855.0L1316.2 857.7L1321.7 860.3L1326.6 862.9L1331.1 865.4L1335.5 867.7L1340.0 870.0L1344.7 872.2L1349.6 874.4L1354.4 876.6L1358.7 878.5L1362.3 880.1L1365.0 881.2" fill="none" stroke="#aaa" stroke-width="6.0" stroke-linecap="round"/><path d="M1172.5 816.2L1210.0 823.8" fill="none" stroke="#aaa" stroke-width="9.0" stroke-linecap="round"/><path d="M1172.5 816.2L1176.4 817.0L1181.8 818.0L1188.1 819.1L1195.2 820.5L1202.6 822.1L1210.0 823.8L1217.6 825.6L1225.7 827.7L1234.2 830.0L1242.9 832.4L1251.5 834.9L1260.0 837.5L1268.6 840.2L1277.4 843.1L1286.2 846.2L1294.8 849.2L1302.8 852.2L1310.0 855.0L1316.2 857.7L1321.7 860.3L1326.6 862.9L1331.1 865.4L1335.5 867.7L1340.0 870.0L1344.7 872.2L1349.6 874.4L1354.4 876.6L1358.7 878.5L1362.3 880.1L1365.0 881.2" fill="none" stroke="#555" stroke-width="3.0" stroke-linecap="round" stroke-dasharray="6 5"/><path d="M565.0 878.0L568.9 876.6L574.3 874.7L580.6 872.4L587.4 870.1L594.1 867.8L600.0 866.0L605.3 864.5L610.5 863.1L615.5 861.8L620.4 860.7L625.2 859.8L630.0 859.0L635.0 858.5L640.2 858.2L645.4 858.1L650.1 858.0L654.1 858.0L657.0 858.0" fill="none" stroke="#aaa" stroke-width="5.0" stroke-linecap="round"/><path d="M651.0 857.0L657.0 862.0" fill="none" stroke="#aaa" stroke-width="4.0" stroke-linecap="round"/><path d="M498.0 916.0L501.4 913.7L506.2 910.4L511.8 906.6L517.9 902.5L524.1 898.5L530.0 895.0L535.7 891.9L541.4 888.9L547.3 885.9L553.2 883.1L559.1 880.5L565.0 878.0L570.9 875.7L576.9 873.4L582.8 871.4L588.7 869.4L594.5 867.7L600.0 866.0L605.6 864.5L611.5 863.0L617.2 861.8L622.4 860.6L626.8 859.7L630.0 859.0" fill="none" stroke="#aaa" stroke-width="4.5" stroke-linecap="round"/><path d="M498.0 916.0L501.4 913.7L506.2 910.4L511.8 906.6L517.9 902.5L524.1 898.5L530.0 895.0L535.7 891.9L541.4 888.9L547.3 885.9L553.2 883.1L559.1 880.5L565.0 878.0L570.9 875.7L576.9 873.4L582.8 871.4L588.7 869.4L594.5 867.7L600.0 866.0L605.6 864.5L611.5 863.0L617.2 861.8L622.4 860.6L626.8 859.7L630.0 859.0" fill="none" stroke="#555" stroke-width="3.0" stroke-linecap="round" stroke-dasharray="10 3"/><path d="M498.0 916.0L501.4 913.7L506.2 910.4L511.8 906.6L517.9 902.5L524.1 898.5L530.0 895.0L535.7 891.9L541.4 888.9L547.3 885.9L553.2 883.1L559.1 880.5L565.0 878.0L571.2 875.6L578.0 873.2L584.7 870.9L590.9 868.9L596.2 867.2L600.0 866.0" fill="none" stroke="#0c0c0c" stroke-width="2.0" stroke-linecap="round" stroke-dasharray="4 7"/><path d="M986.6 827.7L987.4 830.3L988.5 833.8L989.8 838.1L991.3 842.6L993.1 847.1L995.1 851.1L997.5 854.8L1000.4 858.4L1003.5 861.9L1006.6 865.4L1009.6 868.9L1012.2 872.4L1014.4 876.0L1016.5 879.5L1018.4 883.1L1020.1 886.6L1021.5 890.2L1022.8 893.7L1023.9 897.3L1024.7 900.8L1025.4 904.4L1025.8 907.9L1026.1 911.5L1026.0 915.0L1025.6 918.7L1025.0 922.5L1024.1 926.3L1023.0 930.0L1021.9 933.4L1020.7 936.3L1019.6 938.7L1018.5 940.5L1017.3 942.0L1015.9 943.5L1014.2 945.1L1012.2 947.0L1009.6 949.3L1006.6 952.0L1003.4 954.8L999.9 957.5L996.4 959.9L993.0 961.9L989.6 963.4L986.1 964.7L982.5 965.7L978.9 966.4L975.3 966.9L971.7 967.2L968.1 967.2L964.4 967.0L960.8 966.5L957.2 965.8L953.7 964.9L950.4 964.0L947.2 962.9L944.2 961.6L941.2 960.2L938.4 958.7L935.8 957.1L933.4 955.5L931.1 953.7L928.9 951.7L927.0 949.6L925.2 947.7L923.8 946.0L922.7 944.8" fill="none" stroke="#aaa" stroke-width="12.0" stroke-linecap="round"/><path d="M986.6 827.7L987.4 830.3L988.5 833.8L989.8 838.1L991.3 842.6L993.1 847.1L995.1 851.1L997.5 854.8L1000.4 858.4L1003.5 861.9L1006.6 865.4L1009.6 868.9L1012.2 872.4L1014.4 876.0L1016.5 879.5L1018.4 883.1L1020.1 886.6L1021.5 890.2L1022.8 893.7L1023.9 897.3L1024.7 900.8L1025.4 904.4L1025.8 907.9L1026.1 911.5L1026.0 915.0L1025.6 918.7L1025.0 922.5L1024.1 926.3L1023.0 930.0L1021.9 933.4L1020.7 936.3L1019.6 938.7L1018.5 940.5L1017.3 942.0L1015.9 943.5L1014.2 945.1L1012.2 947.0L1009.6 949.3L1006.6 952.0L1003.4 954.8L999.9 957.5L996.4 959.9L993.0 961.9L989.6 963.4L986.1 964.7L982.5 965.7L978.9 966.4L975.3 966.9L971.7 967.2L968.1 967.2L964.4 967.0L960.8 966.5L957.2 965.8L953.7 964.9L950.4 964.0L947.2 962.9L944.2 961.6L941.2 960.2L938.4 958.7L935.8 957.1L933.4 955.5L931.1 953.7L928.9 951.7L927.0 949.6L925.2 947.7L923.8 946.0L922.7 944.8" fill="none" stroke="#555" stroke-width="9.0" stroke-linecap="round"/><path d="M1012.2 947.0L1010.1 948.7L1007.3 951.2L1003.9 954.1L1000.3 957.1L996.5 959.8L993.0 961.9L989.6 963.4L986.1 964.7L982.5 965.7L978.9 966.4L975.3 966.9L971.7 967.2L968.1 967.2L964.4 967.0L960.8 966.5L957.2 965.8L953.7 964.9L950.4 964.0L947.2 962.9L944.0 961.5L940.9 959.9L938.1 958.4L935.5 956.8L933.4 955.5L931.6 954.2L930.2 953.0L929.1 951.8L928.2 950.7L927.5 949.8L927.0 949.1" fill="none" stroke="#555" stroke-width="11.0" stroke-linecap="round"/><path d="M869.5 957.6L869.8 956.5L870.2 954.9L870.8 953.0L871.5 950.9L872.5 948.9L873.7 947.0L875.4 945.1L877.3 943.1L879.6 941.2L881.9 939.3L884.3 937.7L886.5 936.3L888.7 935.3L890.9 934.4L893.2 933.7L895.3 933.3L897.4 933.1L899.3 933.1L901.0 933.4L902.6 933.8L904.1 934.4L905.4 935.3L906.7 936.7L907.8 938.4L908.8 941.1L909.7 944.5L910.5 948.4L911.1 952.1L911.6 955.4L912.1 957.6" fill="none" stroke="#aaa" stroke-width="11.0" stroke-linecap="round"/><path d="M869.5 957.6L869.8 956.5L870.2 954.9L870.8 953.0L871.5 950.9L872.5 948.9L873.7 947.0L875.4 945.1L877.3 943.1L879.6 941.2L881.9 939.3L884.3 937.7L886.5 936.3L888.7 935.3L890.9 934.4L893.2 933.7L895.3 933.3L897.4 933.1L899.3 933.1L901.0 933.4L902.6 933.8L904.1 934.4L905.4 935.3L906.7 936.7L907.8 938.4L908.8 941.1L909.7 944.5L910.5 948.4L911.1 952.1L911.6 955.4L912.1 957.6" fill="none" stroke="#555" stroke-width="7.0" stroke-linecap="round"/><path d="M843.9 957.6L843.6 955.8L843.1 953.2L842.6 950.2L842.1 946.9L841.8 943.6L841.8 940.6L842.0 937.7L842.5 934.8L843.1 931.9L843.9 929.1L844.9 926.3L846.0 923.5L847.4 920.9L848.9 918.2L850.6 915.5L852.4 913.0L854.5 910.7L856.7 908.6L859.1 906.9L861.8 905.4L864.7 904.1L867.6 902.9L870.7 901.6L873.7 900.1L877.0 898.3L880.7 896.3L884.4 894.2L887.8 892.3L890.8 890.6L892.9 889.5" fill="none" stroke="#aaa" stroke-width="9.0" stroke-linecap="round"/><path d="M843.9 957.6L843.6 955.8L843.1 953.2L842.6 950.2L842.1 946.9L841.8 943.6L841.8 940.6L842.0 937.7L842.5 934.8L843.1 931.9L843.9 929.1L844.9 926.3L846.0 923.5L847.4 920.9L848.9 918.2L850.6 915.5L852.4 913.0L854.5 910.7L856.7 908.6L859.1 906.9L861.8 905.4L864.7 904.1L867.6 902.9L870.7 901.6L873.7 900.1L877.0 898.3L880.7 896.3L884.4 894.2L887.8 892.3L890.8 890.6L892.9 889.5" fill="none" stroke="#555" stroke-width="5.0" stroke-linecap="round"/><path d="M1014.3 947.0L1016.7 946.9L1020.1 946.7L1024.0 946.6L1028.2 946.5L1032.2 946.6L1035.6 947.0L1038.6 947.6L1041.5 948.5L1044.2 949.5L1046.7 950.7L1048.8 952.0L1050.5 953.4L1051.8 954.9L1052.7 956.7L1053.3 958.5L1053.5 960.5L1053.3 962.3L1052.6 964.0L1051.4 965.6L1049.7 967.3L1047.6 968.9L1045.1 970.3L1042.5 971.6L1039.9 972.5L1036.9 973.2L1033.7 973.6L1030.2 973.8L1026.8 973.8L1023.5 973.7L1020.7 973.6L1018.2 973.3L1015.8 972.7L1013.6 972.1L1011.7 971.4L1010.2 970.8L1009.0 970.4" fill="none" stroke="#aaa" stroke-width="11.0" stroke-linecap="round"/><path d="M1014.3 947.0L1016.7 946.9L1020.1 946.7L1024.0 946.6L1028.2 946.5L1032.2 946.6L1035.6 947.0L1038.6 947.6L1041.5 948.5L1044.2 949.5L1046.7 950.7L1048.8 952.0L1050.5 953.4L1051.8 954.9L1052.7 956.7L1053.3 958.5L1053.5 960.5L1053.3 962.3L1052.6 964.0L1051.4 965.6L1049.7 967.3L1047.6 968.9L1045.1 970.3L1042.5 971.6L1039.9 972.5L1036.9 973.2L1033.7 973.6L1030.2 973.8L1026.8 973.8L1023.5 973.7L1020.7 973.6L1018.2 973.3L1015.8 972.7L1013.6 972.1L1011.7 971.4L1010.2 970.8L1009.0 970.4" fill="none" stroke="#555" stroke-width="7.0" stroke-linecap="round"/><path d="M1038.8 906.5L1039.7 908.7L1041.0 911.7L1042.5 915.3L1044.3 919.0L1046.2 922.6L1048.4 925.7L1050.8 928.1L1053.7 930.3L1056.7 932.3L1059.8 934.3L1062.7 936.3L1065.4 938.4L1067.9 940.8L1070.3 943.2L1072.6 945.6L1074.7 948.1L1076.6 950.7L1078.2 953.4L1079.4 956.3L1080.4 959.5L1081.1 962.8L1081.7 965.9L1082.1 968.5L1082.4 970.4" fill="none" stroke="#aaa" stroke-width="11.0" stroke-linecap="round"/><path d="M1038.8 906.5L1039.7 908.7L1041.0 911.7L1042.5 915.3L1044.3 919.0L1046.2 922.6L1048.4 925.7L1050.8 928.1L1053.7 930.3L1056.7 932.3L1059.8 934.3L1062.7 936.3L1065.4 938.4L1067.9 940.8L1070.3 943.2L1072.6 945.6L1074.7 948.1L1076.6 950.7L1078.2 953.4L1079.4 956.3L1080.4 959.5L1081.1 962.8L1081.7 965.9L1082.1 968.5L1082.4 970.4" fill="none" stroke="#555" stroke-width="7.0" stroke-linecap="round"/></g></svg></div><div id="rightdock" class="a"></div><div class="a" style="left:1513px;top:63px;width:7px;height:1017px;background:#454545"></div><div class="a" style="left:1516px;top:63px;width:1px;height:1017px;background:#505050"></div><div class="a" style="left:1516px;top:562px;width:2px;height:20px;background:#8a8a8a"></div><div class="a" style="left:178px;top:562px;width:2px;height:20px;background:#8a8a8a"></div><div class="a" style="left:1521px;top:67px;width:22px;height:20px;background:#333"></div><div class="a" style="left:1545px;top:67px;width:22px;height:20px;background:#333"></div><div class="a" style="left:1569px;top:67px;width:22px;height:20px;background:#333"></div><div class="a" style="left:1593px;top:67px;width:22px;height:20px;background:#333"></div><div class="a" style="left:1637px;top:67px;width:22px;height:20px;background:#333"></div><div class="a" style="left:1660px;top:67px;width:22px;height:20px;background:#333"></div><div class="a" style="left:1614px;top:64px;width:23px;height:24px;background:#454545;border:1px solid #5c5c5c;border-bottom:none"></div><svg class="a" style="left:1520px;top:64px" width="400" height="24" viewBox="1520 64 400 24"><defs><radialGradient id="bg1"><stop offset="0.2" stop-color="#000"/><stop offset="1" stop-color="#fff"/></radialGradient><linearGradient id="og" x1="0" x2="1" y1="0" y2="0"><stop offset="0" stop-color="#f0a030"/><stop offset="0.3" stop-color="#ffd080"/><stop offset="0.55" stop-color="#f5a535"/><stop offset="0.8" stop-color="#ffc868"/><stop offset="1" stop-color="#f0a030"/></linearGradient></defs><rect x="1523.500" y="68.500" width="17" height="17" fill="#fff"/><circle cx="1532" cy="77" r="5" fill="url(#bg1)"/><path d="M1538.500 80v5M1536 82.500h5" stroke="#3344cc" stroke-width="1.200"/><rect x="1547.500" y="68.500" width="17" height="17" fill="url(#og)"/><rect x="1571.500" y="68.500" width="17" height="17" fill="#fff"/><text x="1580" y="81.500" font-size="11" font-weight="bold" text-anchor="middle" fill="#000" font-family="Liberation Sans,sans-serif">Aa</text><rect x="1595.500" y="69.500" width="14" height="15" fill="#e8f0ff"/><path d="M1600 72l-1.500 5" stroke="#5577bb" stroke-width="1.200"/><path d="M1631.500 69.500l-8 11" stroke="#d0d0d0" stroke-width="2.200" stroke-linecap="round"/><path d="M1624.500 79c-2 0-3 1.500-3 3.500l-3 3.500c3.500 .5 7-1.500 8-5z" fill="#d0d0d0"/><rect x="1639.500" y="68.500" width="17" height="17" fill="#6a6a6a"/><path d="M1639.500 68.500h6v6h-6zM1651 68.500h5.500v6H1651zM1645.500 74.500h5.500v5.500h-5.500zM1639.500 80h6v5.500h-6zM1651 80h5.500v5.500H1651z" fill="#575757"/><rect x="1663" y="73" width="16" height="12" fill="#f0f0f0"/><path d="M1663 75h16M1663 78h16M1663 81h16" stroke="#222" stroke-width="1.500" stroke-dasharray="1.500 1.500"/><path d="M1664.500 76.500h16M1664.500 79.500h16" stroke="#222" stroke-width="1.500" stroke-dasharray="1.500 1.500"/><path d="M1665 73l2-3.500h8l2 3.500z" fill="#ddd"/><rect x="1904.500" y="71.500" width="9" height="9" fill="none" stroke="#bdbdbd"/><path d="M1911.500 73.500v5l-4.500-2.500z" fill="#cfcfcf"/></svg><div class="a" style="left:1520px;top:87px;width:400px;height:296px;background:#3b3b3b;border:1px solid #585858;border-right:none"></div><div class="a" style="left:1523px;top:92px;width:393px;height:16px;background:#222"></div><div class="t" style="left:1526.0px;top:94.7px;font-size:11.00px;color:#e6e6e6;">2. Hardness 050</div><div class="a" style="left:1523px;top:111px;width:393px;height:135px;background:#fff"></div><div class="a" style="left:1696px;top:154px;width:48px;height:48px;border-radius:24px;background:radial-gradient(circle closest-side,#000 0,#060606 28%,#555 52%,#bdbdbd 72%,#f4f4f4 88%,#fff 100%)"></div><svg class="a" style="left:1908px;top:238px" width="8" height="8"><path d="M8 0v8H0z" fill="#6a7cff"/></svg><div class="t" style="left:1522.0px;top:255.2px;font-size:11.00px;color:#9a9a9a;">Shape:</div><div class="a" style="left:1558px;top:247px;width:26px;height:26px;background:#282828;border:1px solid #1c1c1c;border-radius:4px"></div><svg class="a" style="left:1558px;top:247px" width="80" height="26" viewBox="1558 247 80 26" fill="#a8a8a8"><circle cx="1571" cy="260" r="6.300"/><rect x="1591" y="254" width="12.500" height="12.500"/><path d="M1623 253l7 7-7 7-7-7z"/></svg><div class="row" style="top:276px"></div><div class="a" style="left:1523px;top:277px;width:8px;height:13px;background:#5a5a5a;border-right:1px solid #0c0c0c"></div><div class="t" style="left:1524.5px;top:277.7px;font-size:11.00px;color:#4e4e4e;">Radius</div><div class="a" style="left:1523px;top:277px;width:8px;height:13px;overflow:hidden"><div class="t" style="left:1.5px;top:0.7px;font-size:11.00px;color:#e0e0e0;">Radius</div></div><div class="t" style="right:17.0px;top:277.7px;font-size:11.00px;color:#4a4a4a;">25.0</div><svg class="a" style="left:1905px;top:276px" width="10" height="14" fill="none" stroke="#5c5c5c" stroke-width="1.500"><path d="M1.500 5.500l3.500-3 3.500 3M1.500 8.500l3.500 3 3.500-3"/></svg><div class="row" style="top:294px"></div><div class="t" style="left:1524.5px;top:295.7px;font-size:11.00px;color:#4e4e4e;">Spikes</div><div class="t" style="right:17.0px;top:295.7px;font-size:11.00px;color:#4a4a4a;">2</div><svg class="a" style="left:1905px;top:294px" width="10" height="14" fill="none" stroke="#5c5c5c" stroke-width="1.500"><path d="M1.500 5.500l3.500-3 3.500 3M1.500 8.500l3.500 3 3.500-3"/></svg><div class="row" style="top:312px"></div><div class="a" style="left:1523px;top:313px;width:190px;height:13px;background:#5a5a5a;border-right:1px solid #0c0c0c"></div><div class="t" style="left:1524.5px;top:313.7px;font-size:11.00px;color:#e0e0e0;">Hardness</div><div class="t" style="right:17.0px;top:313.7px;font-size:11.00px;color:#4a4a4a;">0.50</div><svg class="a" style="left:1905px;top:312px" width="10" height="14" fill="none" stroke="#5c5c5c" stroke-width="1.500"><path d="M1.500 5.500l3.500-3 3.500 3M1.500 8.500l3.500 3 3.500-3"/></svg><div class="row" style="top:330px"></div><div class="t" style="left:1524.5px;top:331.7px;font-size:11.00px;color:#4e4e4e;">Aspect ratio</div><div class="t" style="right:17.0px;top:331.7px;font-size:11.00px;color:#4a4a4a;">1.0</div><svg class="a" style="left:1905px;top:330px" width="10" height="14" fill="none" stroke="#5c5c5c" stroke-width="1.500"><path d="M1.500 5.500l3.500-3 3.500 3M1.500 8.500l3.500 3 3.500-3"/></svg><div class="row" style="top:348px"></div><div class="t" style="left:1524.5px;top:349.7px;font-size:11.00px;color:#4e4e4e;">Angle</div><div class="t" style="right:17.0px;top:349.7px;font-size:11.00px;color:#4a4a4a;">0.0</div><svg class="a" style="left:1905px;top:348px" width="10" height="14" fill="none" stroke="#5c5c5c" stroke-width="1.500"><path d="M1.500 5.500l3.500-3 3.500 3M1.500 8.500l3.500 3 3.500-3"/></svg><div class="row" style="top:366px"></div><div class="a" style="left:1523px;top:367px;width:15px;height:13px;background:#5a5a5a;border-right:1px solid #0c0c0c"></div><div class="t" style="left:1524.5px;top:367.7px;font-size:11.00px;color:#4e4e4e;">Spacing</div><div class="a" style="left:1523px;top:367px;width:15px;height:13px;overflow:hidden"><div class="t" style="left:1.5px;top:0.7px;font-size:11.00px;color:#e0e0e0;">Spacing</div></div><div class="t" style="right:17.0px;top:367.7px;font-size:11.00px;color:#4a4a4a;">10.0</div><svg class="a" style="left:1905px;top:366px" width="10" height="14" fill="none" stroke="#5c5c5c" stroke-width="1.500"><path d="M1.500 5.500l3.500-3 3.500 3M1.500 8.500l3.500 3 3.500-3"/></svg><div class="a" style="left:1710px;top:384px;width:4px;height:2px;background:#8a8a8a"></div><div class="a" style="left:1716px;top:384px;width:4px;height:2px;background:#8a8a8a"></div><div class="a" style="left:1722px;top:384px;width:4px;height:2px;background:#8a8a8a"></div><div class="a" style="left:1579px;top:390px;width:68px;height:20px;background:#333;border:1px solid #3c3c3c"></div><div class="a" style="left:1648px;top:390px;width:52px;height:20px;background:#333;border:1px solid #3c3c3c"></div><div class="a" style="left:1520px;top:388px;width:59px;height:23px;background:#454545;border:1px solid #5c5c5c;border-bottom:none"></div><svg class="a" style="left:1520px;top:388px" width="400" height="24" viewBox="1520 388 400 24"><g fill="#d0d0d0"><path d="M1524.500 391h12l-2.500 3.500h-12zM1524.500 396h12l-2.500 3.500h-12zM1524.500 401h12l-2.500 3.500h-12z"/></g><rect x="1580.500" y="392.500" width="14" height="14" fill="none" stroke="#c8c8c8" stroke-width="1.200"/><path d="M1584 395v9M1587.500 395v9M1591 395v9" stroke="#c8c8c8" stroke-width="1.400"/><path d="M1651.500 405c2-6 10-6 12 0" fill="none" stroke="#d0d0d0" stroke-width="2"/><path d="M1650.500 397.500h15" stroke="#d0d0d0" stroke-width="1.300"/><rect x="1655.500" y="395.500" width="4" height="4" fill="#d0d0d0"/><rect x="1649.500" y="396" width="3" height="3" fill="#d0d0d0"/><rect x="1663.500" y="396" width="3" height="3" fill="#d0d0d0"/><rect x="1904.500" y="394.500" width="9" height="9" fill="none" stroke="#bdbdbd"/><path d="M1911.500 396.500v5l-4.500-2.500z" fill="#cfcfcf"/></svg><div class="t" style="left:1540.0px;top:394.2px;font-size:11.00px;color:#e0e0e0;">Layers</div><div class="t" style="left:1598.0px;top:394.7px;font-size:11.00px;color:#d4d4d4;">Channels</div><div class="t" style="left:1668.0px;top:394.7px;font-size:11.00px;color:#d4d4d4;">Paths</div><div class="a" style="left:1520px;top:410px;width:400px;height:670px;background:#3b3b3b;border-top:1px solid #585858;border-left:1px solid #585858"></div><div class="a" style="left:1522px;top:414px;width:348px;height:26px;background:#2b2b2b;border:1px solid #1e1e1e;border-radius:4px"></div><div class="a" style="left:1872px;top:414px;width:45px;height:26px;background:#2b2b2b;border:1px solid #1e1e1e;border-radius:4px"></div><div class="t" style="left:1529.0px;top:421.7px;font-size:11.00px;color:#dcdcdc;">Mode</div><div class="t" style="right:75.5px;top:421.7px;font-size:11.00px;color:#dcdcdc;">Normal</div><svg class="a" style="left:1850px;top:420px" width="66" height="16" viewBox="1850 420 66 16" fill="none" stroke="#e0e0e0" stroke-width="1.500"><path d="M1851.500 424.500l5.500 5.500 5.500-5.500M1898.500 424.500l5.500 5.500 5.500-5.500"/><path d="M1880.500 424a5 5 0 1 1-1 7.500" stroke="#c8c8c8"/><path d="M1883 421.500l-3 2.500 3 2.500" stroke="#c8c8c8"/><circle cx="1879" cy="432.500" r="2" fill="#c8c8c8" stroke="none"/></svg><div class="a" style="left:1522px;top:443px;width:394px;height:15px;background:#5a5a5a;border:1px solid #6e6e6e"></div><div class="a" style="left:1904px;top:444px;width:11px;height:13px;background:#3b3b3b;border-left:1px solid #111"></div><div class="t" style="left:1524.0px;top:445.2px;font-size:11.00px;color:#e4e4e4;">Opacity</div><div class="t" style="right:17.0px;top:445.2px;font-size:11.00px;color:#e4e4e4;">100.0</div><svg class="a" style="left:1905px;top:443px" width="10" height="15" fill="none" stroke="#d0d0d0" stroke-width="1.400"><path d="M1.500 6l3.500-3 3.500 3M1.500 9l3.500 3 3.500-3"/></svg><div class="t" style="left:1522.0px;top:467.2px;font-size:11.00px;color:#dcdcdc;">Lock:</div><svg class="a" style="left:1554px;top:462px" width="74" height="22" viewBox="1554 462 74 22"><path d="M1570 465.500l-6 9" stroke="#d0d0d0" stroke-width="2" stroke-linecap="round"/><path d="M1563.500 474c-2 0-3 1-3.500 3l-3 3c3 .5 6.500-1 7.500-4.500z" fill="#d0d0d0"/><path d="M1590 464.500l3 3.500h-2v3.500h3.500v-2l3.500 3-3.500 3v-2H1591v3.500h2l-3 3.500-3-3.500h2V473.500h-3.500v2l-3.500-3 3.500-3v2h3.500V468h-2z" fill="#d0d0d0"/><rect x="1609" y="464.500" width="16" height="16" fill="#8a8a8a"/><path d="M1609 464.500h5.300v5.300H1609zM1619.700 464.500h5.300v5.300h-5.300zM1614.300 469.800h5.400v5.400h-5.400zM1609 475.200h5.300v5.300H1609zM1619.700 475.200h5.300v5.300h-5.300z" fill="#5a5a5a"/></svg><div class="a" style="left:1522px;top:485px;width:394px;height:567px;background:#303030;border-radius:0 0 4px 4px"></div><div class="a" style="left:1522px;top:485px;width:394px;height:32px;background:#212121"></div><svg class="a" style="left:1526px;top:492px" width="22" height="18" viewBox="0 0 22 18" fill="none" stroke="#e0e0e0" stroke-width="1.500"><path d="M1.500 9c3-5 6-6.500 9.500-6.500s6.500 1.500 9.500 6.500c-3 5-6 6.500-9.500 6.500S4.500 14 1.500 9z"/><circle cx="11" cy="9" r="3.200" fill="#e0e0e0" stroke="none"/></svg><div class="a" style="left:1598px;top:488px;width:36px;height:27px;background:#fff"></div><svg class="a" style="left:1598px;top:488px" width="36" height="27"><path d="M12 16c1-4 4-6 7-5M14 18c1-3 3-4 5-3" stroke="#ccc" stroke-width="1" fill="none"/></svg><div class="t" style="left:1638.0px;top:495.7px;font-size:11.00px;color:#e6e6e6;">Babyhead.png</div><svg class="a" style="left:1520px;top:1052px" width="400" height="26" viewBox="1520 1052 400 26" fill="none" stroke="#c8c8c8" stroke-width="1.500"><path d="M1544.500 1058.500h4l3 3v9.500h-10.500v-9"/><path d="M1541 1056v6M1538 1059h6"/><path d="M1587.500 1071v-14h5l1.500 2h8.500v12z" fill="#c8c8c8" stroke="none"/><path d="M1595.500 1062v7M1592 1065.500h7" stroke="#3b3b3b" stroke-width="1.600"/><path d="M1637.500 1068l6.500-6.500 6.500 6.500"/><path d="M1686.500 1061l6.500 6.500 6.500-6.500"/><rect x="1735.500" y="1058.500" width="9" height="7"/><rect x="1739.500" y="1062.500" width="9" height="7" fill="#3b3b3b"/><path d="M1785 1059h8l-2 2.500h-8zM1785 1063.500h8l-2 2.500h-8zM1785 1068h8l-2 2.500h-8z" fill="#c8c8c8" stroke="none"/><path d="M1796.500 1058v11M1794 1067l2.500 3 2.500-3" /><path d="M1834 1064.500h14l-3.500 6h-14z" fill="#c8c8c8" stroke="none"/><path d="M1835.500 1056.500h8v4c0 2-2 3.500-4 3.500s-4-1.500-4-3.500z" fill="#c8c8c8" stroke="none"/><rect x="1883.500" y="1056.500" width="15" height="15" rx="1.500" fill="#c8c8c8" stroke="none"/><path d="M1887 1060l8 8M1895 1060l-8 8" stroke="#303030" stroke-width="2.200"/></svg><div class="a" style="left:1498px;top:142px;width:15px;height:888px;background:#222"></div><div class="a" style="left:1500px;top:340px;width:12px;height:204px;background:#595959;border-radius:3px"></div><div class="a" style="left:201px;top:1031px;width:1296px;height:15px;background:#222"></div><div class="a" style="left:569px;top:1033px;width:317px;height:12px;background:#595959;border-radius:3px"></div><svg class="a" style="left:182px;top:1030px" width="18" height="18"><rect x="3.500" y="3.500" width="10" height="10" fill="#6a6a6a" stroke="#9a9a9a" stroke-dasharray="1.500 1"/></svg><svg class="a" style="left:1498px;top:122px" width="16" height="18"><rect x="2" y="3" width="12" height="12" fill="#cfcfcf"/><circle cx="8" cy="9" r="3.800" fill="#8c8c8c" stroke="#555" stroke-width="1.500"/><path d="M11 12l3 3" stroke="#555" stroke-width="1.500"/></svg><svg class="a" style="left:1498px;top:1030px" width="18" height="18"><path d="M9 2l7 14-7-4.500-7 4.500z" fill="#d0d0d0"/></svg><div class="a" style="left:278px;top:1049px;width:46px;height:28px;background:#2b2b2b;border:1px solid #1e1e1e;border-radius:4px"></div><div class="t" style="left:285.0px;top:1058.2px;font-size:11.00px;color:#dcdcdc;">px</div><div class="a" style="left:325px;top:1051px;width:36px;height:24px;background:#2e2e2e;border:1px solid #242424"></div><div class="t" style="left:328.0px;top:1058.2px;font-size:11.00px;color:#dcdcdc;">300 %</div><div class="a" style="left:360px;top:1049px;width:18px;height:28px;background:#2b2b2b;border:1px solid #1e1e1e;border-radius:4px"></div><svg class="a" style="left:300px;top:1056px" width="80" height="14" viewBox="300 1056 80 14" fill="none" stroke="#e0e0e0" stroke-width="1.500"><path d="M306 1060l5.500 5.500 5.500-5.500M363.500 1060l5.500 5.500 5.500-5.500"/></svg><div class="t" style="left:380.0px;top:1056.7px;font-size:13.33px;color:#e0e0e0;">Select by Color Tool: Select regions with similar colors</div><div class="a" style="left:116px;top:87px;width:224px;height:59px;background:#484848;border:1px solid #5e5e5e;box-shadow:0 1px 3px rgba(0,0,0,.45)"></div><div class="a" style="left:118px;top:117px;width:220px;height:26px;background:#111"></div><svg class="a" style="left:140px;top:92px" width="24" height="50" viewBox="140 92 24 50"><path d="M147.500 102.500l10.500 8.500" stroke="#d0d0d0" stroke-width="1.800" stroke-linecap="round"/><path d="M145.500 97.500l1 2.300 2.500-.5-1.300 2.200 1.600 1.900-2.500.3-.8 2.400-1.300-2.200-2.500.2 1.700-1.900-1-2.300 2.300 1z" fill="#d0d0d0"/><rect x="144.500" y="121.500" width="12" height="9" fill="none" stroke="#d8d8d8" stroke-width="1.200" stroke-dasharray="1.400 1"/><circle cx="150.500" cy="126" r="2.900" fill="#d8d8d8"/><circle cx="147" cy="136.300" r="2.800" fill="#7a7a7a"/><circle cx="154.800" cy="136.300" r="2.300" fill="none" stroke="#e0e0e0" stroke-width="1.200"/></svg><div class="t" style="left:164.0px;top:97.7px;font-size:13.33px;color:#f0f0f0;">Fuzzy Select</div><div class="t" style="right:1591.0px;top:97.7px;font-size:13.33px;color:#f0f0f0;">U</div><div class="t" style="left:164.0px;top:123.7px;font-size:13.33px;color:#ffffff;">Select by Color</div><div class="t" style="right:1590.5px;top:123.7px;font-size:13.33px;color:#ffffff;">Shift+O</div><div class="a" style="left:279px;top:152px;width:325px;height:48px;background:#484848;border:1px solid #2a2a2a;border-radius:3px"></div><div class="t" style="left:283.0px;top:156.8px;font-size:13.25px;color:#e8e8e8;">Select by Color Tool: Select regions with similar colors</div><div class="t" style="right:1320.0px;top:184.7px;font-size:11.00px;color:#dcdcdc;font-style:italic">Press F1 for more help</div><svg class="a" style="left:264px;top:136px" width="16" height="24" viewBox="0 0 16 24"><path d="M2 1.500v16l3.800-3.600 2.700 6.300 2.600-1.100-2.700-6.200h5.300z" fill="#1a1a1a" stroke="#f4f4f4" stroke-width="1.100"/></svg></body></html>
